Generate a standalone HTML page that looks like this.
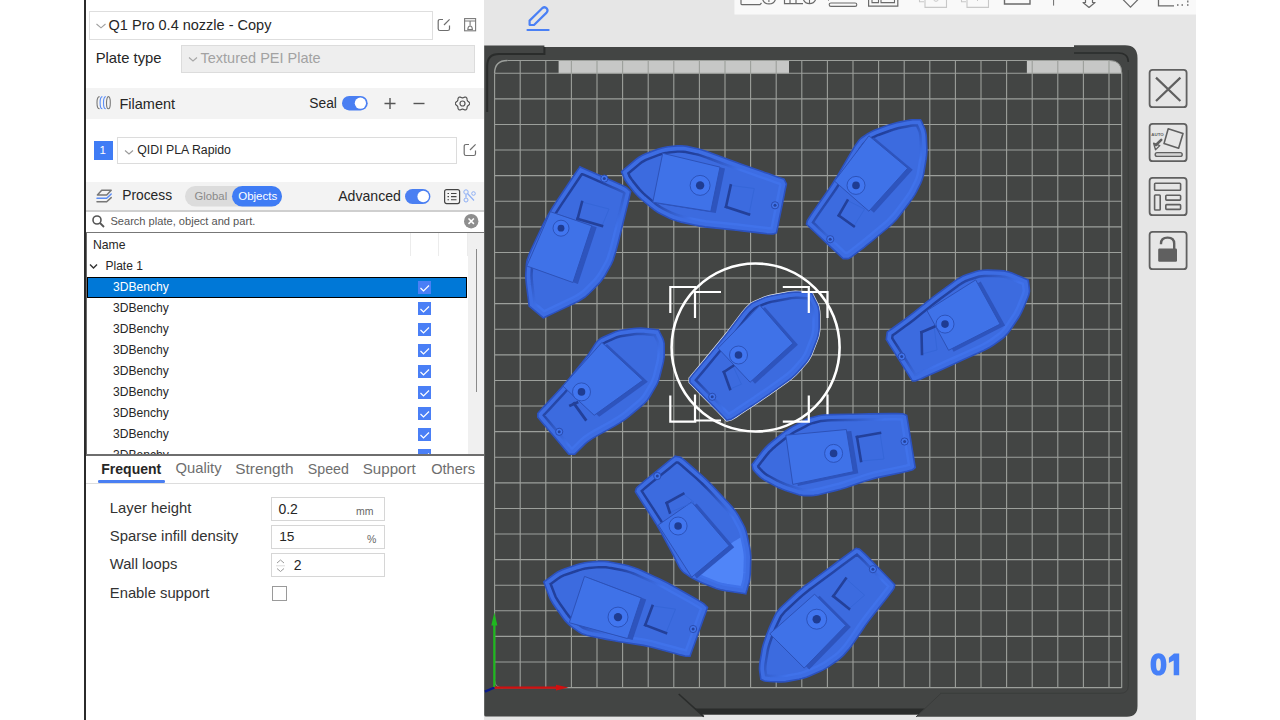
<!DOCTYPE html>
<html><head><meta charset="utf-8">
<style>
*{margin:0;padding:0;box-sizing:border-box;}
html,body{width:1280px;height:720px;overflow:hidden;background:#fff;}
body{position:relative;font-family:"Liberation Sans",sans-serif;color:#262626;}
.a{position:absolute;}
.t{position:absolute;white-space:nowrap;line-height:1;}
</style></head><body>
<!-- left dark border -->
<div class="a" style="left:84px;top:0;width:2px;height:720px;background:#2b2b2b"></div>
<!-- LEFT PANEL -->
<div id="lp" class="a" style="left:86px;top:0;width:398px;height:720px;background:#fff"></div>
<div class="a" style="left:89.2px;top:11.2px;width:343.6px;height:28.6px;background:#fff;border:1px solid #dedede;"></div>
<svg class="a" style="left:95.5px;top:22.5px" width="11" height="7" viewBox="0 0 11 7"><path d="M0.5 1 L5 4.8 L9.5 1" fill="none" stroke="#a0a0a0" stroke-width="1.1"/></svg>
<div class="t" style="left:108.6px;top:18.4px;font-size:14.5px;color:#262626;">Q1 Pro 0.4 nozzle - Copy</div>
<svg class="a" style="left:437px;top:18px" width="14" height="14" viewBox="0 0 14 14"><path d="M6 1.5 H3 Q1.2 1.5 1.2 3.3 V10.7 Q1.2 12.5 3 12.5 H10.7 Q12.5 12.5 12.5 10.7 V7.5" fill="none" stroke="#6e6e6e" stroke-width="1.2"/><path d="M7 7 L12.6 1.4" stroke="#6e6e6e" stroke-width="1.2"/></svg>
<svg class="a" style="left:463.5px;top:18px" width="13" height="14" viewBox="0 0 13 14"><rect x="0.6" y="0.6" width="11" height="12.2" fill="none" stroke="#7a7a7a" stroke-width="1.1"/><path d="M0.6 3 H11.6 M6.1 3 V7.5" stroke="#7a7a7a" stroke-width="1.1"/><path d="M3.8 11.5 Q4 8 6.1 8 Q8.2 8 8.4 11.5 Z" fill="none" stroke="#7a7a7a" stroke-width="1.1"/></svg>
<div class="t" style="left:95.7px;top:50.7px;font-size:14.8px;color:#262626;">Plate type</div>
<div class="a" style="left:181.0px;top:45.0px;width:293.8px;height:27.7px;background:#eeeeee;border:1px solid #dcdcdc;"></div>
<svg class="a" style="left:187.5px;top:56px" width="11" height="7" viewBox="0 0 11 7"><path d="M1 1.5 L5 5 L9 1.5" fill="none" stroke="#a8a8a8" stroke-width="1.2"/></svg>
<div class="t" style="left:200.5px;top:50.9px;font-size:14.5px;color:#a2a2a2;">Textured PEI Plate</div>
<div class="a" style="left:86.0px;top:87.8px;width:398.0px;height:31.2px;background:#f3f3f3;"></div>
<svg class="a" style="left:96px;top:96px" width="15" height="14" viewBox="0 0 15 14"><path d="M3.6 0.6 Q1 0.6 1 6.7 Q1 12.8 3.6 12.8" fill="none" stroke="#777" stroke-width="1.1"/><path d="M6.4 0.6 Q4.1 0.6 4.1 6.7 Q4.1 12.8 6.4 12.8" fill="none" stroke="#5a8cf5" stroke-width="1.1"/><path d="M9.8 0.6 Q7.5 0.6 7.5 6.7 Q7.5 12.8 9.8 12.8" fill="none" stroke="#5a8cf5" stroke-width="1.1"/><ellipse cx="12.4" cy="6.7" rx="1.9" ry="6.1" fill="none" stroke="#777" stroke-width="1.1"/></svg>
<div class="t" style="left:119.5px;top:97.1px;font-size:14.5px;color:#262626;">Filament</div>
<div class="t" style="left:309.3px;top:97.1px;font-size:13.8px;color:#262626;">Seal</div>
<svg class="a" style="left:342px;top:96.2px" width="26" height="15" viewBox="0 0 26 15"><rect x="0" y="0" width="25.7" height="14.4" rx="7.2" fill="#4a7ff2"/><circle cx="18.4" cy="7.2" r="5.6" fill="#fff"/></svg>
<svg class="a" style="left:384px;top:97.5px" width="12" height="12" viewBox="0 0 12 12"><path d="M6 0 V11 M0.5 5.5 H11.5" stroke="#555" stroke-width="1.4"/></svg>
<svg class="a" style="left:413px;top:97.5px" width="12" height="12" viewBox="0 0 12 12"><path d="M0.5 5.5 H11.5" stroke="#555" stroke-width="1.4"/></svg>
<svg class="a" style="left:455px;top:95.8px" width="15" height="15" viewBox="0 0 15 15"><path d="M14.65 7.50 L14.58 7.96 L14.37 8.40 L14.06 8.80 L13.68 9.16 L13.29 9.46 L12.92 9.75 L12.62 10.02 L12.39 10.32 L12.25 10.67 L12.16 11.07 L12.10 11.53 L12.03 12.03 L11.91 12.53 L11.72 13.00 L11.44 13.40 L11.08 13.69 L10.64 13.86 L10.15 13.90 L9.65 13.83 L9.16 13.68 L8.69 13.50 L8.27 13.32 L7.87 13.19 L7.50 13.15 L7.13 13.19 L6.73 13.32 L6.31 13.50 L5.84 13.68 L5.35 13.83 L4.85 13.90 L4.36 13.86 L3.93 13.69 L3.56 13.40 L3.28 13.00 L3.09 12.53 L2.97 12.03 L2.90 11.53 L2.84 11.07 L2.75 10.67 L2.61 10.32 L2.38 10.02 L2.08 9.75 L1.71 9.46 L1.32 9.16 L0.94 8.80 L0.63 8.40 L0.42 7.96 L0.35 7.50 L0.42 7.04 L0.63 6.60 L0.94 6.20 L1.32 5.84 L1.71 5.54 L2.08 5.25 L2.38 4.98 L2.61 4.68 L2.75 4.33 L2.84 3.93 L2.90 3.47 L2.97 2.97 L3.09 2.47 L3.28 2.00 L3.56 1.60 L3.92 1.31 L4.36 1.14 L4.85 1.10 L5.35 1.17 L5.84 1.32 L6.31 1.50 L6.73 1.68 L7.13 1.81 L7.50 1.85 L7.87 1.81 L8.27 1.68 L8.69 1.50 L9.16 1.32 L9.65 1.17 L10.15 1.10 L10.64 1.14 L11.08 1.31 L11.44 1.60 L11.72 2.00 L11.91 2.47 L12.03 2.97 L12.10 3.47 L12.16 3.93 L12.25 4.33 L12.39 4.67 L12.62 4.98 L12.92 5.25 L13.29 5.54 L13.68 5.84 L14.06 6.20 L14.37 6.60 L14.58 7.04Z" fill="none" stroke="#555" stroke-width="1.2" stroke-linejoin="round"/><circle cx="7.5" cy="7.5" r="2.5" fill="none" stroke="#555" stroke-width="1.2"/></svg>
<div class="a" style="left:93.7px;top:141.4px;width:18.9px;height:18.6px;background:#3f7cf5;"></div>
<div class="t" style="left:99.6px;top:145.3px;font-size:11.5px;color:#fff;">1</div>
<div class="a" style="left:117.3px;top:137.2px;width:339.5px;height:27.3px;background:#fff;border:1px solid #dcdcdc;"></div>
<svg class="a" style="left:124px;top:149px" width="11" height="7" viewBox="0 0 11 7"><path d="M1 1.5 L5 5 L9 1.5" fill="none" stroke="#9a9a9a" stroke-width="1.1"/></svg>
<div class="t" style="left:137.3px;top:144.3px;font-size:12.3px;color:#262626;">QIDI PLA Rapido</div>
<svg class="a" style="left:463px;top:143px" width="14" height="14" viewBox="0 0 14 14"><path d="M6 1.5 H3 Q1.2 1.5 1.2 3.3 V10.7 Q1.2 12.5 3 12.5 H10.7 Q12.5 12.5 12.5 10.7 V7.5" fill="none" stroke="#6e6e6e" stroke-width="1.2"/><path d="M7 7 L12.6 1.4" stroke="#6e6e6e" stroke-width="1.2"/></svg>
<div class="a" style="left:86.0px;top:182.2px;width:398.0px;height:28.2px;background:#f3f3f3;"></div>
<svg class="a" style="left:96px;top:189px" width="17" height="15" viewBox="0 0 17 15"><path d="M5.7 1.2 H15.2 L10.7 6 H1.4 Z" fill="none" stroke="#777" stroke-width="1.5" stroke-linejoin="round"/><path d="M1 9.3 H10.7 L15.2 5" fill="none" stroke="#5a8cf5" stroke-width="1.5" stroke-linecap="round" stroke-linejoin="round"/><path d="M1 12.8 H10.7 L15.2 8.6" fill="none" stroke="#777" stroke-width="1.5" stroke-linecap="round" stroke-linejoin="round"/></svg>
<div class="t" style="left:122.2px;top:188.5px;font-size:13.8px;color:#262626;">Process</div>
<svg class="a" style="left:185.4px;top:186.2px" width="97" height="21" viewBox="0 0 97 21"><rect x="0" y="0" width="97" height="20.6" rx="10.3" fill="#dcdcdc"/><rect x="47" y="0" width="50" height="20.6" rx="10.3" fill="#3f7cf5"/></svg>
<div class="t" style="left:194.5px;top:190.6px;font-size:11.3px;color:#8a8a8a;">Global</div>
<div class="t" style="left:238.2px;top:190.5px;font-size:11.5px;color:#fff;">Objects</div>
<div class="t" style="left:338.2px;top:189.1px;font-size:14.1px;color:#262626;">Advanced</div>
<svg class="a" style="left:405px;top:188.8px" width="26" height="15" viewBox="0 0 26 15"><rect x="0" y="0" width="25.4" height="15" rx="7.5" fill="#4a7ff2"/><circle cx="18.2" cy="7.5" r="5.8" fill="#fff"/></svg>
<svg class="a" style="left:444px;top:189px" width="17" height="16" viewBox="0 0 17 16"><rect x="0.6" y="0.6" width="15" height="14" rx="2" fill="none" stroke="#444" stroke-width="1.2"/><path d="M3.5 4.5 H5 M7 4.5 H12.5 M3.5 7.6 H5 M7 7.6 H12.5 M3.5 10.7 H5 M7 10.7 H12.5" stroke="#444" stroke-width="1.1"/></svg>
<svg class="a" style="left:463px;top:189px" width="14" height="15" viewBox="0 0 14 15"><circle cx="3" cy="3" r="2.2" fill="none" stroke="#8fb0f5" stroke-width="1"/><circle cx="10.5" cy="4.5" r="1.8" fill="none" stroke="#8fb0f5" stroke-width="1"/><circle cx="3" cy="11" r="2" fill="none" stroke="#8fb0f5" stroke-width="1"/><path d="M4.5 4.5 L11 11.5 M3 5.5 L3 8.5" stroke="#8fb0f5" stroke-width="1.2"/></svg>
<div class="a" style="left:86.0px;top:210.4px;width:398.0px;height:1.8px;background:#cfcfcf;"></div>
<div class="a" style="left:86.0px;top:212.2px;width:398.0px;height:19.6px;background:#fff;"></div>
<svg class="a" style="left:91.7px;top:215px" width="13" height="13" viewBox="0 0 13 13"><circle cx="5" cy="5" r="4" fill="none" stroke="#555" stroke-width="1.6"/><path d="M8 8 L12 12" stroke="#555" stroke-width="1.8"/></svg>
<div class="t" style="left:110.4px;top:215.5px;font-size:11.1px;color:#555;">Search plate, object and part.</div>
<svg class="a" style="left:463.8px;top:214.4px" width="15" height="15" viewBox="0 0 15 15"><circle cx="7.2" cy="7.2" r="7.2" fill="#8e8e8e"/><path d="M4.5 4.5 L9.9 9.9 M9.9 4.5 L4.5 9.9" stroke="#fff" stroke-width="1.5"/></svg>
<div class="a" style="left:86.0px;top:231.8px;width:398.0px;height:1.6px;background:#777777;"></div>
<div class="a" style="left:86.0px;top:233.4px;width:398.0px;height:221.6px;background:#fff;"></div>
<div class="a" style="left:468.0px;top:233.4px;width:16.0px;height:221.6px;background:#f0f0f0;"></div>
<div class="a" style="left:86.0px;top:233.4px;width:1.2px;height:221.6px;background:#6a6a6a;"></div>
<div class="a" style="left:475.6px;top:249.4px;width:1.6px;height:142.6px;background:#8a8a8a;"></div>
<div class="a" style="left:410.0px;top:233.4px;width:1.0px;height:22.6px;background:#ececec;"></div>
<div class="a" style="left:438.4px;top:233.4px;width:1.0px;height:22.6px;background:#ececec;"></div>
<div class="a" style="left:466.5px;top:233.4px;width:1.0px;height:22.6px;background:#ececec;"></div>
<div class="t" style="left:93.0px;top:238.5px;font-size:12.2px;color:#262626;">Name</div>
<svg class="a" style="left:89.2px;top:263.2px" width="9" height="7" viewBox="0 0 9 7"><path d="M1 1.5 L4.5 5 L8 1.5" fill="none" stroke="#333" stroke-width="1.4"/></svg>
<div class="t" style="left:105.5px;top:260.1px;font-size:12px;color:#262626;">Plate 1</div>
<div class="a" style="left:87.1px;top:277.3px;width:380.3px;height:20.3px;background:#0078d7;border:1px solid #000;"></div>
<div class="t" style="left:113.0px;top:281.2px;font-size:12.1px;color:#fff;">3DBenchy</div>
<div class="a" style="left:418.0px;top:280.8px;width:13.3px;height:13.2px;background:#4a7ff6;"></div>
<svg class="a" style="left:419px;top:283.9px" width="11" height="8" viewBox="0 0 11 8"><path d="M1.5 4 L4.5 7 L10 1.5" fill="none" stroke="#fff" stroke-width="1.2"/></svg>
<div class="t" style="left:113.0px;top:302.2px;font-size:12.1px;color:#262626;">3DBenchy</div>
<div class="a" style="left:418.0px;top:301.8px;width:13.3px;height:13.2px;background:#4a7ff6;"></div>
<svg class="a" style="left:419px;top:304.9px" width="11" height="8" viewBox="0 0 11 8"><path d="M1.5 4 L4.5 7 L10 1.5" fill="none" stroke="#fff" stroke-width="1.2"/></svg>
<div class="t" style="left:113.0px;top:323.2px;font-size:12.1px;color:#262626;">3DBenchy</div>
<div class="a" style="left:418.0px;top:322.8px;width:13.3px;height:13.2px;background:#4a7ff6;"></div>
<svg class="a" style="left:419px;top:325.9px" width="11" height="8" viewBox="0 0 11 8"><path d="M1.5 4 L4.5 7 L10 1.5" fill="none" stroke="#fff" stroke-width="1.2"/></svg>
<div class="t" style="left:113.0px;top:344.2px;font-size:12.1px;color:#262626;">3DBenchy</div>
<div class="a" style="left:418.0px;top:343.8px;width:13.3px;height:13.2px;background:#4a7ff6;"></div>
<svg class="a" style="left:419px;top:346.9px" width="11" height="8" viewBox="0 0 11 8"><path d="M1.5 4 L4.5 7 L10 1.5" fill="none" stroke="#fff" stroke-width="1.2"/></svg>
<div class="t" style="left:113.0px;top:365.2px;font-size:12.1px;color:#262626;">3DBenchy</div>
<div class="a" style="left:418.0px;top:364.8px;width:13.3px;height:13.2px;background:#4a7ff6;"></div>
<svg class="a" style="left:419px;top:367.9px" width="11" height="8" viewBox="0 0 11 8"><path d="M1.5 4 L4.5 7 L10 1.5" fill="none" stroke="#fff" stroke-width="1.2"/></svg>
<div class="t" style="left:113.0px;top:386.2px;font-size:12.1px;color:#262626;">3DBenchy</div>
<div class="a" style="left:418.0px;top:385.8px;width:13.3px;height:13.2px;background:#4a7ff6;"></div>
<svg class="a" style="left:419px;top:388.9px" width="11" height="8" viewBox="0 0 11 8"><path d="M1.5 4 L4.5 7 L10 1.5" fill="none" stroke="#fff" stroke-width="1.2"/></svg>
<div class="t" style="left:113.0px;top:407.2px;font-size:12.1px;color:#262626;">3DBenchy</div>
<div class="a" style="left:418.0px;top:406.8px;width:13.3px;height:13.2px;background:#4a7ff6;"></div>
<svg class="a" style="left:419px;top:409.9px" width="11" height="8" viewBox="0 0 11 8"><path d="M1.5 4 L4.5 7 L10 1.5" fill="none" stroke="#fff" stroke-width="1.2"/></svg>
<div class="t" style="left:113.0px;top:428.2px;font-size:12.1px;color:#262626;">3DBenchy</div>
<div class="a" style="left:418.0px;top:427.8px;width:13.3px;height:13.2px;background:#4a7ff6;"></div>
<svg class="a" style="left:419px;top:430.9px" width="11" height="8" viewBox="0 0 11 8"><path d="M1.5 4 L4.5 7 L10 1.5" fill="none" stroke="#fff" stroke-width="1.2"/></svg>
<div class="t" style="left:113.0px;top:449.2px;font-size:12.1px;color:#262626;">3DBenchy</div>
<div class="a" style="left:418.0px;top:448.8px;width:13.3px;height:13.2px;background:#4a7ff6;"></div>
<svg class="a" style="left:419px;top:451.9px" width="11" height="8" viewBox="0 0 11 8"><path d="M1.5 4 L4.5 7 L10 1.5" fill="none" stroke="#fff" stroke-width="1.2"/></svg>
<div class="a" style="left:86.0px;top:454.2px;width:398.0px;height:1.4px;background:#6e6e6e;"></div>
<div class="a" style="left:86.0px;top:455.6px;width:398.0px;height:264.4px;background:#fff;"></div>
<div class="t" style="left:101.3px;top:462.0px;font-size:14px;color:#262626;font-weight:bold;">Frequent</div>
<div class="t" style="left:175.5px;top:461.4px;font-size:14.8px;color:#6e6e6e;">Quality</div>
<div class="t" style="left:235.3px;top:460.9px;font-size:15.4px;color:#6e6e6e;">Strength</div>
<div class="t" style="left:307.8px;top:461.9px;font-size:14.2px;color:#6e6e6e;">Speed</div>
<div class="t" style="left:362.8px;top:461.1px;font-size:15.1px;color:#6e6e6e;">Support</div>
<div class="t" style="left:431.2px;top:461.5px;font-size:14.6px;color:#6e6e6e;">Others</div>
<div class="a" style="left:98.0px;top:480.2px;width:66.7px;height:2.4px;background:#4a7ff2;border-radius:1.2px;"></div>
<div class="a" style="left:86.0px;top:482.8px;width:398.0px;height:1.2px;background:#dddddd;"></div>
<div class="t" style="left:109.8px;top:500.9px;font-size:14.8px;color:#333;">Layer height</div>
<div class="t" style="left:109.8px;top:529.2px;font-size:14.9px;color:#333;">Sparse infill density</div>
<div class="t" style="left:109.8px;top:557.4px;font-size:14.75px;color:#333;">Wall loops</div>
<div class="t" style="left:109.8px;top:585.8px;font-size:14.8px;color:#333;">Enable support</div>
<div class="a" style="left:271.0px;top:496.6px;width:113.7px;height:24.0px;background:#fff;border:1px solid #d6d6d6;"></div>
<div class="a" style="left:271.0px;top:525.2px;width:113.7px;height:23.6px;background:#fff;border:1px solid #d6d6d6;"></div>
<div class="a" style="left:271.0px;top:553.3px;width:113.7px;height:24.2px;background:#fff;border:1px solid #d6d6d6;"></div>
<div class="t" style="left:278.4px;top:501.5px;font-size:14px;color:#262626;">0.2</div>
<div class="t" style="left:356.0px;top:505.6px;font-size:10.5px;color:#666;">mm</div>
<div class="t" style="left:279.2px;top:530.2px;font-size:13.7px;color:#262626;">15</div>
<div class="t" style="left:367.0px;top:533.9px;font-size:10.5px;color:#666;">%</div>
<svg class="a" style="left:275.5px;top:558.5px" width="10" height="14" viewBox="0 0 10 14"><path d="M1 4 L4.5 1 L8 4 M1 9.5 L4.5 12.5 L8 9.5" fill="none" stroke="#9a9a9a" stroke-width="1"/><path d="M0 6.8 H9" stroke="#dcdcdc" stroke-width="1"/></svg>
<div class="t" style="left:293.8px;top:558.1px;font-size:14px;color:#262626;">2</div>
<div class="a" style="left:272.0px;top:586.0px;width:14.8px;height:15.3px;background:#fff;border:1px solid #9a9a9a;"></div>
<!-- VIEWPORT -->
<div class="a" style="left:484px;top:0;width:712px;height:720px;background:#e6e6e6"></div>
<svg class="a" style="left:484px;top:0" width="712" height="720" viewBox="484 0 712 720">
<path d="M484.2 45.6 L544.4 45.6 L544.4 47 L1074 47 L1074 45.3 L1125 45.3 Q1137.5 45.3 1137.5 58 L1137.5 706 Q1137.5 716.7 1127 716.7 L486 716.6 Q484.2 716.6 484.2 715 Z" fill="#434544"/>
<path d="M694.9 708.4 L924.9 708.4 L918.1 714.8 L702.1 714.8 Z" fill="#2a2c2b"/>
<path d="M702.1 714.8 L918.1 714.8 L915.6 717.2 L915.6 720 L703.8 720 L703.8 716.6 Z" fill="#e6e6e6"/>
<path d="M678.7 694 L703.8 716.6" stroke="#2a2c2b" stroke-width="1.6"/>
<path d="M940.9 693.4 L916 716.9" stroke="#3a3c3b" stroke-width="1"/>
<path d="M487.2 112 L487.2 66 Q487.2 54 499 54 L544.4 54 L544.4 47" fill="none" stroke="#2a2c2b" stroke-width="2"/>
<path d="M1074 53 L1118 53 Q1128.3 53 1128.3 62" fill="none" stroke="#2a2c2b" stroke-width="1.6"/>
<rect x="558.6" y="60.5" width="230.4" height="13" fill="#c6c7c6"/>
<path d="M1026.9 60.5 L1109 60.5 Q1121.7 60.5 1121.7 73 L1121.7 73.5 L1026.9 73.5 Z" fill="#c6c7c6"/>
<path d="M494.60 73.30V679.80 M520.20 60.50V687.80 M545.80 60.50V687.80 M571.40 60.50V687.80 M597.00 60.50V687.80 M622.60 60.50V687.80 M648.20 60.50V687.80 M673.80 60.50V687.80 M699.40 60.50V687.80 M725.00 60.50V687.80 M750.60 60.50V687.80 M776.20 60.50V687.80 M801.80 60.50V687.80 M827.40 60.50V687.80 M853.00 60.50V687.80 M878.60 60.50V687.80 M904.20 60.50V687.80 M929.80 60.50V687.80 M955.40 60.50V687.80 M981.00 60.50V687.80 M1006.60 60.50V687.80 M1032.20 60.50V687.80 M1057.80 60.50V687.80 M1083.40 60.50V687.80 M1109.00 60.50V687.80 M1121.70 72.50V687.80 M494.60 73.28H1121.70 M494.60 98.88H1121.70 M494.60 124.47H1121.70 M494.60 150.07H1121.70 M494.60 175.67H1121.70 M494.60 201.27H1121.70 M494.60 226.86H1121.70 M494.60 252.46H1121.70 M494.60 278.06H1121.70 M494.60 303.65H1121.70 M494.60 329.25H1121.70 M494.60 354.85H1121.70 M494.60 380.44H1121.70 M494.60 406.04H1121.70 M494.60 431.64H1121.70 M494.60 457.24H1121.70 M494.60 482.83H1121.70 M494.60 508.43H1121.70 M494.60 534.03H1121.70 M494.60 559.62H1121.70 M494.60 585.22H1121.70 M494.60 610.82H1121.70 M494.60 636.41H1121.70 M494.60 662.01H1121.70 M494.60 687.61H1121.70 M507.40 60.50H1109.70" stroke="#9c9f9b" stroke-width="1.1" fill="none"/>
<path d="M494.6 73.3 Q494.6 60.5 507.40000000000003 60.5" stroke="#9c9f9b" stroke-width="1.4" fill="none"/>
<path d="M1109.7 60.5 Q1121.7 60.5 1121.7 72.5" stroke="#8a8c89" stroke-width="1" fill="none"/>
<path d="M494.6 679.8 Q494.6 687.8 502.6 687.8" stroke="#8a8c89" stroke-width="1" fill="none"/>
<path d="M1128.3 70 L1128.3 686 Q1128.3 693.3 1120 693.3 L940 693.3" stroke="#3a3c3b" stroke-width="1" fill="none"/>
<path d="M494.6 687.5 L484.9 691.7" stroke="#0a1a8a" stroke-width="2.4"/>
<path d="M494.3 687 V622" stroke="#1fb81f" stroke-width="2.2"/>
<path d="M491.3 625.5 L494.3 612.5 L497.4 625.5 Z" fill="#1fb81f"/>
<path d="M494.6 687.6 H558" stroke="#d01010" stroke-width="2.2"/>
<path d="M556 684.8 L568.4 687.6 L556 690.4 Z" fill="#d01010"/>
<defs><clipPath id="bc0"><path d="M579.9 166.8 L580.9 167.3 L585.8 169.4 L591.7 171.9 L614.2 181.8 L620.2 184.4 L625.6 187.0 L627.2 188.1 L629.5 190.4 L630.1 191.0 L630.6 191.5 L630.7 191.6 L630.3 193.1 L628.6 200.2 L626.5 208.8 L618.4 241.7 L616.0 250.8 L613.1 260.1 L611.2 264.3 L605.4 274.7 L603.5 277.8 L600.3 282.0 L597.6 284.9 L588.3 294.2 L585.0 297.0 L578.8 301.0 L573.2 303.8 L553.6 313.1 L548.4 315.5 L544.2 317.5 L543.3 317.9 L543.0 317.6 L541.5 316.4 L539.7 314.9 L532.8 309.1 L531.0 307.6 L529.5 306.4 L529.2 306.1 L529.1 305.5 L528.7 302.5 L528.3 298.9 L526.5 285.0 L526.1 281.0 L525.8 276.0 L525.9 273.0 L526.5 263.7 L527.1 260.3 L529.5 253.6 L532.2 247.5 L542.7 225.4 L546.1 218.7 L551.7 209.0 L556.2 202.0 L571.8 178.8 L575.8 172.8 L579.2 167.9Z"/></clipPath><linearGradient id="gl0" gradientUnits="userSpaceOnUse" x1="551.6" y1="228.7" x2="583.6" y2="260.7"><stop offset="0" stop-color="#fff"/><stop offset="1" stop-color="#000"/></linearGradient><mask id="mk0" maskUnits="userSpaceOnUse" x="0" y="0" width="1280" height="720"><rect x="0" y="0" width="1280" height="720" fill="url(#gl0)"/></mask><clipPath id="bc1"><path d="M621.5 171.7 L621.9 171.3 L623.9 169.6 L626.3 167.6 L635.7 159.7 L638.6 157.5 L643.0 154.9 L646.4 153.5 L657.6 149.3 L661.0 148.2 L665.3 147.2 L668.2 146.7 L677.1 145.9 L679.9 145.7 L683.9 146.0 L686.8 146.4 L696.6 148.5 L699.8 149.2 L705.1 150.9 L709.4 152.4 L724.4 158.1 L729.0 159.8 L735.4 162.1 L740.0 163.7 L754.9 169.0 L759.3 170.5 L764.7 172.4 L768.2 173.6 L778.6 177.4 L781.4 178.3 L783.6 179.1 L784.1 179.3 L784.2 179.4 L784.4 179.9 L784.7 180.5 L785.8 182.7 L786.1 183.3 L786.3 183.8 L786.4 183.9 L786.2 185.0 L785.1 190.1 L783.9 196.4 L779.0 220.3 L777.8 226.6 L776.7 231.7 L776.5 232.8 L776.4 232.8 L775.9 233.0 L775.3 233.2 L773.1 233.9 L771.6 234.0 L766.9 233.7 L761.8 233.1 L742.3 230.9 L736.6 230.2 L729.2 229.4 L724.4 228.9 L709.4 227.4 L704.9 226.9 L698.8 225.9 L694.6 225.0 L681.2 222.1 L677.3 221.1 L672.5 219.5 L669.5 218.2 L660.5 213.7 L657.7 212.2 L653.9 209.7 L651.1 207.5 L642.2 200.0 L639.6 197.7 L636.4 194.5 L634.4 192.2 L628.4 184.7 L626.8 182.5 L625.1 180.0 L624.3 178.5 L622.5 174.0 L622.0 172.9 L621.6 171.9Z"/></clipPath><linearGradient id="gl1" gradientUnits="userSpaceOnUse" x1="680.9" y1="166.1" x2="712.9" y2="198.1"><stop offset="0" stop-color="#fff"/><stop offset="1" stop-color="#000"/></linearGradient><mask id="mk1" maskUnits="userSpaceOnUse" x="0" y="0" width="1280" height="720"><rect x="0" y="0" width="1280" height="720" fill="url(#gl1)"/></mask><clipPath id="bc2"><path d="M920.6 119.7 L920.7 120.0 L921.3 121.2 L922.0 122.7 L924.6 128.5 L925.3 130.5 L926.0 134.0 L926.3 137.0 L926.8 147.6 L926.9 150.9 L926.5 155.9 L926.0 159.7 L923.9 172.3 L923.2 176.0 L921.8 180.5 L920.6 183.3 L916.4 191.8 L914.9 194.6 L911.9 199.1 L909.3 202.8 L899.7 215.4 L896.7 219.2 L891.9 224.2 L888.2 227.5 L875.5 238.0 L871.8 241.1 L867.0 244.9 L864.0 247.4 L854.4 254.7 L851.8 256.7 L849.1 258.3 L847.9 258.6 L844.7 258.6 L843.9 258.6 L843.2 258.6 L843.1 258.6 L842.3 257.8 L838.4 254.2 L833.8 249.8 L815.8 233.0 L811.2 228.6 L807.3 225.0 L806.5 224.2 L806.5 224.1 L806.6 223.6 L806.8 223.1 L807.2 220.9 L808.0 219.5 L810.9 215.0 L814.4 209.9 L827.6 191.0 L831.6 185.1 L836.9 176.8 L840.5 170.7 L852.2 150.6 L855.5 145.2 L859.3 140.0 L861.5 138.0 L867.8 133.7 L870.0 132.4 L873.8 130.6 L877.1 129.3 L888.8 125.1 L892.2 123.9 L896.5 122.7 L899.2 122.1 L907.6 120.5 L910.0 120.1 L912.7 119.8 L914.2 119.7 L918.4 119.7 L919.5 119.7 L920.4 119.7Z"/></clipPath><linearGradient id="gl2" gradientUnits="userSpaceOnUse" x1="856.2" y1="159.3" x2="888.2" y2="191.3"><stop offset="0" stop-color="#fff"/><stop offset="1" stop-color="#000"/></linearGradient><mask id="mk2" maskUnits="userSpaceOnUse" x="0" y="0" width="1280" height="720"><rect x="0" y="0" width="1280" height="720" fill="url(#gl2)"/></mask><clipPath id="bc3"><path d="M1028.1 279.9 L1027.6 279.7 L1025.3 278.7 L1022.6 277.6 L1011.9 273.1 L1008.6 271.9 L1003.7 270.9 L999.9 270.6 L987.6 270.1 L983.9 270.2 L979.1 270.7 L976.1 271.5 L966.3 274.7 L963.2 275.9 L958.3 278.7 L954.4 281.3 L941.1 291.1 L937.0 294.1 L931.4 298.4 L927.3 301.6 L914.0 312.3 L910.1 315.4 L905.2 319.1 L902.0 321.5 L892.3 328.5 L889.7 330.4 L887.6 331.9 L887.2 332.2 L887.2 332.4 L887.1 333.1 L887.0 334.1 L886.5 337.6 L886.4 338.6 L886.3 339.3 L886.3 339.5 L886.9 340.4 L889.6 344.8 L893.0 350.1 L905.8 370.4 L909.2 375.7 L911.9 380.1 L912.5 381.0 L912.6 381.0 L913.0 381.0 L913.4 381.0 L915.2 381.0 L916.5 380.6 L920.6 378.9 L925.3 376.8 L943.0 368.9 L948.4 366.4 L956.0 363.0 L961.4 360.6 L979.2 352.6 L984.2 350.3 L989.9 347.2 L993.0 345.3 L1001.8 339.0 L1004.4 336.9 L1007.8 333.3 L1010.1 330.3 L1017.2 319.7 L1019.3 316.5 L1021.7 311.9 L1023.2 308.7 L1027.6 298.0 L1028.7 295.0 L1029.5 291.4 L1029.4 289.3 L1028.6 283.1 L1028.3 281.5 L1028.1 280.2Z"/></clipPath><linearGradient id="gl3" gradientUnits="userSpaceOnUse" x1="939.2" y1="298.0" x2="971.2" y2="330.0"><stop offset="0" stop-color="#fff"/><stop offset="1" stop-color="#000"/></linearGradient><mask id="mk3" maskUnits="userSpaceOnUse" x="0" y="0" width="1280" height="720"><rect x="0" y="0" width="1280" height="720" fill="url(#gl3)"/></mask><clipPath id="bc4"><path d="M811.4 292.8 L811.6 293.1 L812.4 294.8 L813.4 296.8 L817.2 304.3 L818.2 306.9 L819.0 311.2 L819.2 314.8 L819.2 327.1 L819.0 330.9 L818.0 336.3 L816.7 340.1 L811.9 352.4 L810.3 356.1 L807.6 360.6 L805.4 363.4 L797.9 371.9 L795.3 374.6 L790.8 378.5 L787.0 381.3 L773.6 390.9 L769.4 393.9 L762.8 398.3 L757.8 401.8 L740.6 413.2 L736.1 416.2 L731.9 418.8 L730.5 419.4 L728.0 419.9 L727.4 420.0 L726.9 420.1 L726.8 420.1 L726.0 419.2 L722.1 415.3 L717.4 410.4 L699.3 391.9 L694.6 387.0 L690.7 383.1 L689.9 382.2 L689.9 382.1 L689.9 381.7 L689.9 381.2 L689.9 379.3 L689.9 378.8 L689.9 378.4 L689.9 378.3 L690.7 377.4 L694.2 373.1 L698.6 367.9 L715.2 347.9 L720.1 342.0 L726.4 334.2 L730.4 329.1 L742.7 312.8 L746.4 308.4 L750.9 304.2 L753.7 302.4 L762.2 298.7 L765.1 297.6 L769.8 296.2 L773.6 295.5 L787.0 293.0 L790.8 292.4 L795.5 292.0 L798.4 292.1 L806.9 292.5 L809.2 292.7 L811.0 292.8Z"/></clipPath><linearGradient id="gl4" gradientUnits="userSpaceOnUse" x1="741.7" y1="327.7" x2="773.7" y2="359.7"><stop offset="0" stop-color="#fff"/><stop offset="1" stop-color="#000"/></linearGradient><mask id="mk4" maskUnits="userSpaceOnUse" x="0" y="0" width="1280" height="720"><rect x="0" y="0" width="1280" height="720" fill="url(#gl4)"/></mask><clipPath id="bc5"><path d="M658.3 329.7 L658.4 330.0 L659.1 331.2 L659.8 332.7 L662.7 338.4 L663.4 340.3 L664.1 343.4 L664.2 345.9 L664.2 354.4 L664.1 357.2 L663.4 361.5 L662.7 364.8 L659.8 376.3 L658.8 379.7 L657.0 384.2 L655.3 387.2 L649.7 396.7 L647.7 399.7 L644.0 403.7 L640.7 406.6 L629.3 416.2 L625.5 419.1 L619.4 423.1 L614.4 426.1 L597.2 435.6 L592.5 438.4 L587.4 441.9 L584.8 444.1 L578.2 450.7 L576.4 452.5 L575.0 453.9 L574.7 454.2 L574.6 454.2 L574.0 454.2 L573.2 454.2 L570.4 454.2 L569.6 454.2 L569.0 454.2 L568.9 454.2 L568.2 453.4 L564.9 449.5 L561.0 444.8 L545.7 426.6 L541.8 421.9 L538.5 418.0 L537.8 417.2 L537.8 417.1 L537.8 416.7 L537.8 416.2 L537.8 414.3 L537.8 413.8 L537.8 413.4 L537.8 413.3 L538.4 412.7 L541.0 409.8 L544.2 406.4 L556.6 393.0 L560.4 388.9 L565.7 382.7 L569.5 378.2 L581.8 362.9 L585.3 358.6 L589.0 353.7 L590.8 351.0 L595.6 343.4 L597.3 341.2 L600.4 338.6 L603.0 337.2 L612.6 332.9 L615.5 331.7 L619.8 330.5 L623.0 330.0 L633.4 328.5 L636.6 328.2 L640.9 328.1 L643.8 328.3 L653.4 329.2 L655.8 329.5 L657.9 329.7Z"/></clipPath><linearGradient id="gl5" gradientUnits="userSpaceOnUse" x1="586.0" y1="362.6" x2="618.0" y2="394.6"><stop offset="0" stop-color="#fff"/><stop offset="1" stop-color="#000"/></linearGradient><mask id="mk5" maskUnits="userSpaceOnUse" x="0" y="0" width="1280" height="720"><rect x="0" y="0" width="1280" height="720" fill="url(#gl5)"/></mask><clipPath id="bc6"><path d="M752.0 464.7 L752.3 464.3 L753.8 462.4 L755.6 460.0 L762.5 451.1 L764.8 448.4 L768.5 444.7 L771.5 442.1 L781.8 433.8 L785.0 431.4 L789.4 428.5 L792.6 426.6 L802.9 421.2 L805.9 419.6 L809.6 418.1 L811.9 417.4 L818.7 415.7 L821.3 415.2 L826.5 414.8 L831.3 414.6 L848.5 414.3 L854.0 414.2 L862.4 414.0 L869.0 413.9 L891.0 413.6 L896.9 413.5 L902.0 413.7 L903.6 413.9 L905.6 415.0 L906.2 415.2 L906.6 415.5 L906.7 415.5 L906.9 416.7 L907.8 422.1 L908.9 428.8 L913.0 454.2 L914.1 460.9 L915.0 466.3 L915.2 467.5 L915.1 467.6 L914.8 467.9 L914.5 468.2 L913.0 469.6 L911.8 470.1 L907.2 471.3 L901.9 472.5 L882.0 476.6 L876.2 477.9 L868.9 479.9 L864.4 481.3 L850.6 486.1 L846.4 487.5 L840.5 489.3 L836.2 490.4 L822.5 493.8 L818.6 494.7 L814.1 495.4 L811.7 495.6 L804.8 495.6 L802.5 495.4 L798.8 494.7 L795.8 493.8 L785.6 490.4 L782.5 489.3 L778.3 487.5 L775.5 486.1 L766.6 481.3 L764.0 479.9 L761.2 477.9 L759.7 476.6 L755.6 472.5 L754.5 471.3 L753.4 469.8 L753.0 468.9 L752.4 466.1 L752.2 465.4 L752.0 464.8Z"/></clipPath><linearGradient id="gl6" gradientUnits="userSpaceOnUse" x1="804.9" y1="433.9" x2="836.9" y2="465.9"><stop offset="0" stop-color="#fff"/><stop offset="1" stop-color="#000"/></linearGradient><mask id="mk6" maskUnits="userSpaceOnUse" x="0" y="0" width="1280" height="720"><rect x="0" y="0" width="1280" height="720" fill="url(#gl6)"/></mask><clipPath id="bc7"><path d="M675.0 456.2 L675.1 456.3 L675.8 456.4 L676.6 456.5 L679.7 457.0 L681.1 457.7 L684.6 460.3 L688.1 463.4 L701.4 475.1 L705.5 478.9 L711.1 484.4 L715.2 488.7 L728.5 503.0 L732.2 507.1 L736.1 512.1 L738.1 515.2 L743.1 524.4 L744.6 527.4 L746.2 532.0 L747.1 535.6 L749.7 547.8 L750.3 551.6 L750.8 556.8 L750.7 560.6 L750.3 572.8 L750.0 576.3 L749.5 580.5 L748.9 582.9 L746.9 590.0 L746.3 591.9 L745.9 593.4 L745.8 593.8 L745.2 593.7 L742.4 593.2 L738.9 592.7 L725.6 590.7 L721.6 589.9 L716.2 588.4 L712.4 586.9 L700.1 581.9 L696.7 580.3 L692.7 578.4 L690.6 577.1 L684.4 572.9 L682.7 571.5 L680.5 568.9 L679.1 566.6 L675.0 558.4 L673.6 555.7 L671.2 551.1 L669.2 547.3 L662.0 534.0 L659.6 529.8 L655.7 523.2 L652.5 518.1 L641.2 500.7 L638.3 496.2 L635.9 492.5 L635.4 491.7 L635.4 491.6 L635.5 491.2 L635.7 490.6 L636.2 488.6 L637.2 487.3 L641.4 483.6 L646.3 479.5 L665.2 464.2 L670.1 460.2 L674.1 457.0Z"/></clipPath><linearGradient id="gl7" gradientUnits="userSpaceOnUse" x1="677.3" y1="508.8" x2="709.3" y2="540.8"><stop offset="0" stop-color="#fff"/><stop offset="1" stop-color="#000"/></linearGradient><mask id="mk7" maskUnits="userSpaceOnUse" x="0" y="0" width="1280" height="720"><rect x="0" y="0" width="1280" height="720" fill="url(#gl7)"/></mask><clipPath id="bc8"><path d="M543.8 581.9 L544.1 581.7 L545.7 580.5 L547.7 579.1 L555.1 573.6 L557.6 572.0 L561.7 570.0 L565.1 568.8 L576.8 564.8 L580.3 563.8 L585.0 562.7 L588.2 562.3 L598.4 561.4 L601.7 561.3 L606.7 561.6 L610.6 562.2 L623.9 564.7 L628.1 565.7 L634.3 567.7 L639.0 569.6 L654.6 576.7 L659.6 579.0 L667.2 582.8 L673.0 586.0 L692.5 597.0 L697.7 600.0 L702.4 602.8 L703.9 603.9 L706.3 606.3 L706.9 606.9 L707.4 607.4 L707.5 607.5 L707.1 608.6 L705.3 613.7 L703.0 619.9 L694.5 643.8 L692.2 650.0 L690.4 655.1 L690.0 656.2 L689.9 656.2 L689.4 656.2 L688.8 656.2 L686.3 656.2 L684.9 656.0 L680.3 654.9 L675.3 653.5 L656.6 648.5 L651.0 647.0 L643.6 645.4 L638.7 644.6 L623.0 642.2 L618.2 641.5 L611.5 640.3 L606.7 639.4 L591.1 636.3 L586.6 635.3 L581.6 633.4 L578.8 631.8 L571.1 626.4 L568.7 624.4 L565.3 620.9 L562.9 617.8 L555.1 606.8 L552.9 603.5 L550.4 599.2 L549.2 596.2 L545.6 586.8 L544.7 584.3 L544.0 582.3Z"/></clipPath><linearGradient id="gl8" gradientUnits="userSpaceOnUse" x1="600.1" y1="584.1" x2="632.1" y2="616.1"><stop offset="0" stop-color="#fff"/><stop offset="1" stop-color="#000"/></linearGradient><mask id="mk8" maskUnits="userSpaceOnUse" x="0" y="0" width="1280" height="720"><rect x="0" y="0" width="1280" height="720" fill="url(#gl8)"/></mask><clipPath id="bc9"><path d="M856.2 548.3 L856.3 548.3 L856.8 548.4 L857.3 548.6 L859.3 549.1 L860.6 550.1 L864.7 553.9 L869.2 558.4 L886.0 575.8 L890.4 580.3 L894.0 584.0 L894.8 584.8 L894.8 584.9 L894.7 585.3 L894.5 585.9 L894.0 587.9 L893.3 589.2 L890.3 593.3 L886.9 597.7 L873.6 614.6 L869.8 619.4 L865.4 625.4 L863.0 629.0 L855.7 639.8 L853.6 642.9 L851.0 646.5 L849.4 648.6 L844.3 654.4 L842.6 656.2 L839.8 658.7 L837.4 660.5 L829.3 666.2 L826.7 667.9 L822.7 670.1 L819.7 671.5 L809.5 676.0 L806.4 677.2 L802.0 678.6 L798.9 679.3 L788.6 681.1 L785.6 681.6 L781.4 681.9 L778.6 681.9 L769.7 681.5 L767.2 681.3 L764.9 681.0 L763.9 680.7 L761.9 679.7 L761.3 679.5 L760.9 679.2 L760.8 679.2 L760.8 678.9 L760.6 677.7 L760.4 676.2 L759.6 670.5 L759.5 668.5 L759.7 665.1 L760.0 662.2 L761.7 652.0 L762.2 649.0 L763.2 645.0 L764.0 642.4 L766.8 634.3 L767.8 631.7 L769.3 627.9 L770.5 625.1 L774.9 615.7 L776.5 612.7 L780.1 608.3 L783.5 605.0 L795.7 593.7 L799.6 590.3 L805.5 585.5 L810.1 582.1 L825.3 570.8 L829.8 567.6 L835.3 563.5 L838.6 561.0 L848.9 553.4 L851.6 551.4 L854.0 549.6 L854.7 549.1 L855.7 548.6 L856.0 548.4 L856.2 548.3Z"/></clipPath><linearGradient id="gl9" gradientUnits="userSpaceOnUse" x1="797.0" y1="601.4" x2="829.0" y2="633.4"><stop offset="0" stop-color="#fff"/><stop offset="1" stop-color="#000"/></linearGradient><mask id="mk9" maskUnits="userSpaceOnUse" x="0" y="0" width="1280" height="720"><rect x="0" y="0" width="1280" height="720" fill="url(#gl9)"/></mask></defs><g>
<path d="M579.9 166.8 L580.9 167.3 L585.8 169.4 L591.7 171.9 L614.2 181.8 L620.2 184.4 L625.6 187.0 L627.2 188.1 L629.5 190.4 L630.1 191.0 L630.6 191.5 L630.7 191.6 L630.3 193.1 L628.6 200.2 L626.5 208.8 L618.4 241.7 L616.0 250.8 L613.1 260.1 L611.2 264.3 L605.4 274.7 L603.5 277.8 L600.3 282.0 L597.6 284.9 L588.3 294.2 L585.0 297.0 L578.8 301.0 L573.2 303.8 L553.6 313.1 L548.4 315.5 L544.2 317.5 L543.3 317.9 L543.0 317.6 L541.5 316.4 L539.7 314.9 L532.8 309.1 L531.0 307.6 L529.5 306.4 L529.2 306.1 L529.1 305.5 L528.7 302.5 L528.3 298.9 L526.5 285.0 L526.1 281.0 L525.8 276.0 L525.9 273.0 L526.5 263.7 L527.1 260.3 L529.5 253.6 L532.2 247.5 L542.7 225.4 L546.1 218.7 L551.7 209.0 L556.2 202.0 L571.8 178.8 L575.8 172.8 L579.2 167.9Z" fill="#3c6bdf"/>
<path d="M579.9 166.8 L580.9 167.3 L585.8 169.4 L591.7 171.9 L614.2 181.8 L620.2 184.4 L625.6 187.0 L627.2 188.1 L629.5 190.4 L630.1 191.0 L630.6 191.5 L630.7 191.6 L630.3 193.1 L628.6 200.2 L626.5 208.8 L618.4 241.7 L616.0 250.8 L613.1 260.1 L611.2 264.3 L605.4 274.7 L603.5 277.8 L600.3 282.0 L597.6 284.9 L588.3 294.2 L585.0 297.0 L578.8 301.0 L573.2 303.8 L553.6 313.1 L548.4 315.5 L544.2 317.5 L543.3 317.9 L543.0 317.6 L541.5 316.4 L539.7 314.9 L532.8 309.1 L531.0 307.6 L529.5 306.4 L529.2 306.1 L529.1 305.5 L528.7 302.5 L528.3 298.9 L526.5 285.0 L526.1 281.0 L525.8 276.0 L525.9 273.0 L526.5 263.7 L527.1 260.3 L529.5 253.6 L532.2 247.5 L542.7 225.4 L546.1 218.7 L551.7 209.0 L556.2 202.0 L571.8 178.8 L575.8 172.8 L579.2 167.9Z" fill="none" stroke="#4072ea" stroke-width="14" clip-path="url(#bc0)"/>
<g mask="url(#mk0)"><path d="M579.9 166.8 L580.9 167.3 L585.8 169.4 L591.7 171.9 L614.2 181.8 L620.2 184.4 L625.6 187.0 L627.2 188.1 L629.5 190.4 L630.1 191.0 L630.6 191.5 L630.7 191.6 L630.3 193.1 L628.6 200.2 L626.5 208.8 L618.4 241.7 L616.0 250.8 L613.1 260.1 L611.2 264.3 L605.4 274.7 L603.5 277.8 L600.3 282.0 L597.6 284.9 L588.3 294.2 L585.0 297.0 L578.8 301.0 L573.2 303.8 L553.6 313.1 L548.4 315.5 L544.2 317.5 L543.3 317.9 L543.0 317.6 L541.5 316.4 L539.7 314.9 L532.8 309.1 L531.0 307.6 L529.5 306.4 L529.2 306.1 L529.1 305.5 L528.7 302.5 L528.3 298.9 L526.5 285.0 L526.1 281.0 L525.8 276.0 L525.9 273.0 L526.5 263.7 L527.1 260.3 L529.5 253.6 L532.2 247.5 L542.7 225.4 L546.1 218.7 L551.7 209.0 L556.2 202.0 L571.8 178.8 L575.8 172.8 L579.2 167.9Z" fill="none" stroke="#22409c" stroke-width="14" clip-path="url(#bc0)"/></g>
<path d="M579.9 166.8 L580.9 167.3 L585.8 169.4 L591.7 171.9 L614.2 181.8 L620.2 184.4 L625.6 187.0 L627.2 188.1 L629.5 190.4 L630.1 191.0 L630.6 191.5 L630.7 191.6 L630.3 193.1 L628.6 200.2 L626.5 208.8 L618.4 241.7 L616.0 250.8 L613.1 260.1 L611.2 264.3 L605.4 274.7 L603.5 277.8 L600.3 282.0 L597.6 284.9 L588.3 294.2 L585.0 297.0 L578.8 301.0 L573.2 303.8 L553.6 313.1 L548.4 315.5 L544.2 317.5 L543.3 317.9 L543.0 317.6 L541.5 316.4 L539.7 314.9 L532.8 309.1 L531.0 307.6 L529.5 306.4 L529.2 306.1 L529.1 305.5 L528.7 302.5 L528.3 298.9 L526.5 285.0 L526.1 281.0 L525.8 276.0 L525.9 273.0 L526.5 263.7 L527.1 260.3 L529.5 253.6 L532.2 247.5 L542.7 225.4 L546.1 218.7 L551.7 209.0 L556.2 202.0 L571.8 178.8 L575.8 172.8 L579.2 167.9Z" fill="none" stroke="#3d6de3" stroke-width="9" clip-path="url(#bc0)"/>
<path d="M579.9 166.8 L580.9 167.3 L585.8 169.4 L591.7 171.9 L614.2 181.8 L620.2 184.4 L625.6 187.0 L627.2 188.1 L629.5 190.4 L630.1 191.0 L630.6 191.5 L630.7 191.6 L630.3 193.1 L628.6 200.2 L626.5 208.8 L618.4 241.7 L616.0 250.8 L613.1 260.1 L611.2 264.3 L605.4 274.7 L603.5 277.8 L600.3 282.0 L597.6 284.9 L588.3 294.2 L585.0 297.0 L578.8 301.0 L573.2 303.8 L553.6 313.1 L548.4 315.5 L544.2 317.5 L543.3 317.9 L543.0 317.6 L541.5 316.4 L539.7 314.9 L532.8 309.1 L531.0 307.6 L529.5 306.4 L529.2 306.1 L529.1 305.5 L528.7 302.5 L528.3 298.9 L526.5 285.0 L526.1 281.0 L525.8 276.0 L525.9 273.0 L526.5 263.7 L527.1 260.3 L529.5 253.6 L532.2 247.5 L542.7 225.4 L546.1 218.7 L551.7 209.0 L556.2 202.0 L571.8 178.8 L575.8 172.8 L579.2 167.9Z" fill="none" stroke="#2c52bf" stroke-width="1.6"/>
<path d="M555.4 213.2 L596.7 227.3 L577.9 284.0 L531.8 267.5Z" fill="#2e54bd" clip-path="url(#bc0)"/>
<path d="M550.4 211.7 L591.7 225.8 L572.9 282.5 L526.8 266.0Z" fill="#3f72e8" stroke="#2d52b8" stroke-width="1" stroke-linejoin="round"/>
<circle cx="561" cy="228.2" r="8" fill="#4176f0" stroke="#2a4fb4" stroke-width="0.9"/>
<circle cx="561" cy="228.2" r="3.4" fill="#1f3c92"/>
<path d="M582.0 202.0 L609.0 209.0 L602.0 226.0 L577.6 218.8Z" fill="none" stroke="#3566d8" stroke-width="1"/>
<path d="M577.6 218.8 L582.0 202.0" stroke="#23409a" stroke-width="2.6" stroke-linecap="square"/>
<path d="M602.0 226.0 L577.6 218.8" stroke="#23409a" stroke-width="2.6" stroke-linecap="square"/>
<circle cx="604.3" cy="178.6" r="3.6" fill="#4275ec" stroke="#2a4cb0" stroke-width="1"/><circle cx="604.3" cy="178.6" r="1.5" fill="#24439e"/>
</g>
<g>
<path d="M621.5 171.7 L621.9 171.3 L623.9 169.6 L626.3 167.6 L635.7 159.7 L638.6 157.5 L643.0 154.9 L646.4 153.5 L657.6 149.3 L661.0 148.2 L665.3 147.2 L668.2 146.7 L677.1 145.9 L679.9 145.7 L683.9 146.0 L686.8 146.4 L696.6 148.5 L699.8 149.2 L705.1 150.9 L709.4 152.4 L724.4 158.1 L729.0 159.8 L735.4 162.1 L740.0 163.7 L754.9 169.0 L759.3 170.5 L764.7 172.4 L768.2 173.6 L778.6 177.4 L781.4 178.3 L783.6 179.1 L784.1 179.3 L784.2 179.4 L784.4 179.9 L784.7 180.5 L785.8 182.7 L786.1 183.3 L786.3 183.8 L786.4 183.9 L786.2 185.0 L785.1 190.1 L783.9 196.4 L779.0 220.3 L777.8 226.6 L776.7 231.7 L776.5 232.8 L776.4 232.8 L775.9 233.0 L775.3 233.2 L773.1 233.9 L771.6 234.0 L766.9 233.7 L761.8 233.1 L742.3 230.9 L736.6 230.2 L729.2 229.4 L724.4 228.9 L709.4 227.4 L704.9 226.9 L698.8 225.9 L694.6 225.0 L681.2 222.1 L677.3 221.1 L672.5 219.5 L669.5 218.2 L660.5 213.7 L657.7 212.2 L653.9 209.7 L651.1 207.5 L642.2 200.0 L639.6 197.7 L636.4 194.5 L634.4 192.2 L628.4 184.7 L626.8 182.5 L625.1 180.0 L624.3 178.5 L622.5 174.0 L622.0 172.9 L621.6 171.9Z" fill="#3c6bdf"/>
<path d="M621.5 171.7 L621.9 171.3 L623.9 169.6 L626.3 167.6 L635.7 159.7 L638.6 157.5 L643.0 154.9 L646.4 153.5 L657.6 149.3 L661.0 148.2 L665.3 147.2 L668.2 146.7 L677.1 145.9 L679.9 145.7 L683.9 146.0 L686.8 146.4 L696.6 148.5 L699.8 149.2 L705.1 150.9 L709.4 152.4 L724.4 158.1 L729.0 159.8 L735.4 162.1 L740.0 163.7 L754.9 169.0 L759.3 170.5 L764.7 172.4 L768.2 173.6 L778.6 177.4 L781.4 178.3 L783.6 179.1 L784.1 179.3 L784.2 179.4 L784.4 179.9 L784.7 180.5 L785.8 182.7 L786.1 183.3 L786.3 183.8 L786.4 183.9 L786.2 185.0 L785.1 190.1 L783.9 196.4 L779.0 220.3 L777.8 226.6 L776.7 231.7 L776.5 232.8 L776.4 232.8 L775.9 233.0 L775.3 233.2 L773.1 233.9 L771.6 234.0 L766.9 233.7 L761.8 233.1 L742.3 230.9 L736.6 230.2 L729.2 229.4 L724.4 228.9 L709.4 227.4 L704.9 226.9 L698.8 225.9 L694.6 225.0 L681.2 222.1 L677.3 221.1 L672.5 219.5 L669.5 218.2 L660.5 213.7 L657.7 212.2 L653.9 209.7 L651.1 207.5 L642.2 200.0 L639.6 197.7 L636.4 194.5 L634.4 192.2 L628.4 184.7 L626.8 182.5 L625.1 180.0 L624.3 178.5 L622.5 174.0 L622.0 172.9 L621.6 171.9Z" fill="none" stroke="#4072ea" stroke-width="14" clip-path="url(#bc1)"/>
<g mask="url(#mk1)"><path d="M621.5 171.7 L621.9 171.3 L623.9 169.6 L626.3 167.6 L635.7 159.7 L638.6 157.5 L643.0 154.9 L646.4 153.5 L657.6 149.3 L661.0 148.2 L665.3 147.2 L668.2 146.7 L677.1 145.9 L679.9 145.7 L683.9 146.0 L686.8 146.4 L696.6 148.5 L699.8 149.2 L705.1 150.9 L709.4 152.4 L724.4 158.1 L729.0 159.8 L735.4 162.1 L740.0 163.7 L754.9 169.0 L759.3 170.5 L764.7 172.4 L768.2 173.6 L778.6 177.4 L781.4 178.3 L783.6 179.1 L784.1 179.3 L784.2 179.4 L784.4 179.9 L784.7 180.5 L785.8 182.7 L786.1 183.3 L786.3 183.8 L786.4 183.9 L786.2 185.0 L785.1 190.1 L783.9 196.4 L779.0 220.3 L777.8 226.6 L776.7 231.7 L776.5 232.8 L776.4 232.8 L775.9 233.0 L775.3 233.2 L773.1 233.9 L771.6 234.0 L766.9 233.7 L761.8 233.1 L742.3 230.9 L736.6 230.2 L729.2 229.4 L724.4 228.9 L709.4 227.4 L704.9 226.9 L698.8 225.9 L694.6 225.0 L681.2 222.1 L677.3 221.1 L672.5 219.5 L669.5 218.2 L660.5 213.7 L657.7 212.2 L653.9 209.7 L651.1 207.5 L642.2 200.0 L639.6 197.7 L636.4 194.5 L634.4 192.2 L628.4 184.7 L626.8 182.5 L625.1 180.0 L624.3 178.5 L622.5 174.0 L622.0 172.9 L621.6 171.9Z" fill="none" stroke="#22409c" stroke-width="14" clip-path="url(#bc1)"/></g>
<path d="M621.5 171.7 L621.9 171.3 L623.9 169.6 L626.3 167.6 L635.7 159.7 L638.6 157.5 L643.0 154.9 L646.4 153.5 L657.6 149.3 L661.0 148.2 L665.3 147.2 L668.2 146.7 L677.1 145.9 L679.9 145.7 L683.9 146.0 L686.8 146.4 L696.6 148.5 L699.8 149.2 L705.1 150.9 L709.4 152.4 L724.4 158.1 L729.0 159.8 L735.4 162.1 L740.0 163.7 L754.9 169.0 L759.3 170.5 L764.7 172.4 L768.2 173.6 L778.6 177.4 L781.4 178.3 L783.6 179.1 L784.1 179.3 L784.2 179.4 L784.4 179.9 L784.7 180.5 L785.8 182.7 L786.1 183.3 L786.3 183.8 L786.4 183.9 L786.2 185.0 L785.1 190.1 L783.9 196.4 L779.0 220.3 L777.8 226.6 L776.7 231.7 L776.5 232.8 L776.4 232.8 L775.9 233.0 L775.3 233.2 L773.1 233.9 L771.6 234.0 L766.9 233.7 L761.8 233.1 L742.3 230.9 L736.6 230.2 L729.2 229.4 L724.4 228.9 L709.4 227.4 L704.9 226.9 L698.8 225.9 L694.6 225.0 L681.2 222.1 L677.3 221.1 L672.5 219.5 L669.5 218.2 L660.5 213.7 L657.7 212.2 L653.9 209.7 L651.1 207.5 L642.2 200.0 L639.6 197.7 L636.4 194.5 L634.4 192.2 L628.4 184.7 L626.8 182.5 L625.1 180.0 L624.3 178.5 L622.5 174.0 L622.0 172.9 L621.6 171.9Z" fill="none" stroke="#3d6de3" stroke-width="9" clip-path="url(#bc1)"/>
<path d="M621.5 171.7 L621.9 171.3 L623.9 169.6 L626.3 167.6 L635.7 159.7 L638.6 157.5 L643.0 154.9 L646.4 153.5 L657.6 149.3 L661.0 148.2 L665.3 147.2 L668.2 146.7 L677.1 145.9 L679.9 145.7 L683.9 146.0 L686.8 146.4 L696.6 148.5 L699.8 149.2 L705.1 150.9 L709.4 152.4 L724.4 158.1 L729.0 159.8 L735.4 162.1 L740.0 163.7 L754.9 169.0 L759.3 170.5 L764.7 172.4 L768.2 173.6 L778.6 177.4 L781.4 178.3 L783.6 179.1 L784.1 179.3 L784.2 179.4 L784.4 179.9 L784.7 180.5 L785.8 182.7 L786.1 183.3 L786.3 183.8 L786.4 183.9 L786.2 185.0 L785.1 190.1 L783.9 196.4 L779.0 220.3 L777.8 226.6 L776.7 231.7 L776.5 232.8 L776.4 232.8 L775.9 233.0 L775.3 233.2 L773.1 233.9 L771.6 234.0 L766.9 233.7 L761.8 233.1 L742.3 230.9 L736.6 230.2 L729.2 229.4 L724.4 228.9 L709.4 227.4 L704.9 226.9 L698.8 225.9 L694.6 225.0 L681.2 222.1 L677.3 221.1 L672.5 219.5 L669.5 218.2 L660.5 213.7 L657.7 212.2 L653.9 209.7 L651.1 207.5 L642.2 200.0 L639.6 197.7 L636.4 194.5 L634.4 192.2 L628.4 184.7 L626.8 182.5 L625.1 180.0 L624.3 178.5 L622.5 174.0 L622.0 172.9 L621.6 171.9Z" fill="none" stroke="#2c52bf" stroke-width="1.6"/>
<path d="M667.7 154.8 L725.0 168.6 L715.8 212.9 L657.8 203.7Z" fill="#2e54bd" clip-path="url(#bc1)"/>
<path d="M662.7 153.3 L720.0 167.1 L710.8 211.4 L652.8 202.2Z" fill="#3f72e8" stroke="#2d52b8" stroke-width="1" stroke-linejoin="round"/>
<circle cx="700.1" cy="185.4" r="10" fill="#4176f0" stroke="#2a4fb4" stroke-width="0.9"/>
<circle cx="700.1" cy="185.4" r="4.2" fill="#1f3c92"/>
<path d="M730.7 185.4 L754.3 188.5 L749.0 214.4 L726.0 206.8Z" fill="none" stroke="#3566d8" stroke-width="1"/>
<path d="M726.0 206.8 L730.7 185.4" stroke="#23409a" stroke-width="2.6" stroke-linecap="square"/>
<path d="M749.0 214.4 L726.0 206.8" stroke="#23409a" stroke-width="2.6" stroke-linecap="square"/>
<circle cx="775" cy="205.3" r="3.6" fill="#4275ec" stroke="#2a4cb0" stroke-width="1"/><circle cx="775" cy="205.3" r="1.5" fill="#24439e"/>
</g>
<g>
<path d="M920.6 119.7 L920.7 120.0 L921.3 121.2 L922.0 122.7 L924.6 128.5 L925.3 130.5 L926.0 134.0 L926.3 137.0 L926.8 147.6 L926.9 150.9 L926.5 155.9 L926.0 159.7 L923.9 172.3 L923.2 176.0 L921.8 180.5 L920.6 183.3 L916.4 191.8 L914.9 194.6 L911.9 199.1 L909.3 202.8 L899.7 215.4 L896.7 219.2 L891.9 224.2 L888.2 227.5 L875.5 238.0 L871.8 241.1 L867.0 244.9 L864.0 247.4 L854.4 254.7 L851.8 256.7 L849.1 258.3 L847.9 258.6 L844.7 258.6 L843.9 258.6 L843.2 258.6 L843.1 258.6 L842.3 257.8 L838.4 254.2 L833.8 249.8 L815.8 233.0 L811.2 228.6 L807.3 225.0 L806.5 224.2 L806.5 224.1 L806.6 223.6 L806.8 223.1 L807.2 220.9 L808.0 219.5 L810.9 215.0 L814.4 209.9 L827.6 191.0 L831.6 185.1 L836.9 176.8 L840.5 170.7 L852.2 150.6 L855.5 145.2 L859.3 140.0 L861.5 138.0 L867.8 133.7 L870.0 132.4 L873.8 130.6 L877.1 129.3 L888.8 125.1 L892.2 123.9 L896.5 122.7 L899.2 122.1 L907.6 120.5 L910.0 120.1 L912.7 119.8 L914.2 119.7 L918.4 119.7 L919.5 119.7 L920.4 119.7Z" fill="#3c6bdf"/>
<path d="M920.6 119.7 L920.7 120.0 L921.3 121.2 L922.0 122.7 L924.6 128.5 L925.3 130.5 L926.0 134.0 L926.3 137.0 L926.8 147.6 L926.9 150.9 L926.5 155.9 L926.0 159.7 L923.9 172.3 L923.2 176.0 L921.8 180.5 L920.6 183.3 L916.4 191.8 L914.9 194.6 L911.9 199.1 L909.3 202.8 L899.7 215.4 L896.7 219.2 L891.9 224.2 L888.2 227.5 L875.5 238.0 L871.8 241.1 L867.0 244.9 L864.0 247.4 L854.4 254.7 L851.8 256.7 L849.1 258.3 L847.9 258.6 L844.7 258.6 L843.9 258.6 L843.2 258.6 L843.1 258.6 L842.3 257.8 L838.4 254.2 L833.8 249.8 L815.8 233.0 L811.2 228.6 L807.3 225.0 L806.5 224.2 L806.5 224.1 L806.6 223.6 L806.8 223.1 L807.2 220.9 L808.0 219.5 L810.9 215.0 L814.4 209.9 L827.6 191.0 L831.6 185.1 L836.9 176.8 L840.5 170.7 L852.2 150.6 L855.5 145.2 L859.3 140.0 L861.5 138.0 L867.8 133.7 L870.0 132.4 L873.8 130.6 L877.1 129.3 L888.8 125.1 L892.2 123.9 L896.5 122.7 L899.2 122.1 L907.6 120.5 L910.0 120.1 L912.7 119.8 L914.2 119.7 L918.4 119.7 L919.5 119.7 L920.4 119.7Z" fill="none" stroke="#4072ea" stroke-width="14" clip-path="url(#bc2)"/>
<g mask="url(#mk2)"><path d="M920.6 119.7 L920.7 120.0 L921.3 121.2 L922.0 122.7 L924.6 128.5 L925.3 130.5 L926.0 134.0 L926.3 137.0 L926.8 147.6 L926.9 150.9 L926.5 155.9 L926.0 159.7 L923.9 172.3 L923.2 176.0 L921.8 180.5 L920.6 183.3 L916.4 191.8 L914.9 194.6 L911.9 199.1 L909.3 202.8 L899.7 215.4 L896.7 219.2 L891.9 224.2 L888.2 227.5 L875.5 238.0 L871.8 241.1 L867.0 244.9 L864.0 247.4 L854.4 254.7 L851.8 256.7 L849.1 258.3 L847.9 258.6 L844.7 258.6 L843.9 258.6 L843.2 258.6 L843.1 258.6 L842.3 257.8 L838.4 254.2 L833.8 249.8 L815.8 233.0 L811.2 228.6 L807.3 225.0 L806.5 224.2 L806.5 224.1 L806.6 223.6 L806.8 223.1 L807.2 220.9 L808.0 219.5 L810.9 215.0 L814.4 209.9 L827.6 191.0 L831.6 185.1 L836.9 176.8 L840.5 170.7 L852.2 150.6 L855.5 145.2 L859.3 140.0 L861.5 138.0 L867.8 133.7 L870.0 132.4 L873.8 130.6 L877.1 129.3 L888.8 125.1 L892.2 123.9 L896.5 122.7 L899.2 122.1 L907.6 120.5 L910.0 120.1 L912.7 119.8 L914.2 119.7 L918.4 119.7 L919.5 119.7 L920.4 119.7Z" fill="none" stroke="#22409c" stroke-width="14" clip-path="url(#bc2)"/></g>
<path d="M920.6 119.7 L920.7 120.0 L921.3 121.2 L922.0 122.7 L924.6 128.5 L925.3 130.5 L926.0 134.0 L926.3 137.0 L926.8 147.6 L926.9 150.9 L926.5 155.9 L926.0 159.7 L923.9 172.3 L923.2 176.0 L921.8 180.5 L920.6 183.3 L916.4 191.8 L914.9 194.6 L911.9 199.1 L909.3 202.8 L899.7 215.4 L896.7 219.2 L891.9 224.2 L888.2 227.5 L875.5 238.0 L871.8 241.1 L867.0 244.9 L864.0 247.4 L854.4 254.7 L851.8 256.7 L849.1 258.3 L847.9 258.6 L844.7 258.6 L843.9 258.6 L843.2 258.6 L843.1 258.6 L842.3 257.8 L838.4 254.2 L833.8 249.8 L815.8 233.0 L811.2 228.6 L807.3 225.0 L806.5 224.2 L806.5 224.1 L806.6 223.6 L806.8 223.1 L807.2 220.9 L808.0 219.5 L810.9 215.0 L814.4 209.9 L827.6 191.0 L831.6 185.1 L836.9 176.8 L840.5 170.7 L852.2 150.6 L855.5 145.2 L859.3 140.0 L861.5 138.0 L867.8 133.7 L870.0 132.4 L873.8 130.6 L877.1 129.3 L888.8 125.1 L892.2 123.9 L896.5 122.7 L899.2 122.1 L907.6 120.5 L910.0 120.1 L912.7 119.8 L914.2 119.7 L918.4 119.7 L919.5 119.7 L920.4 119.7Z" fill="none" stroke="#3d6de3" stroke-width="9" clip-path="url(#bc2)"/>
<path d="M920.6 119.7 L920.7 120.0 L921.3 121.2 L922.0 122.7 L924.6 128.5 L925.3 130.5 L926.0 134.0 L926.3 137.0 L926.8 147.6 L926.9 150.9 L926.5 155.9 L926.0 159.7 L923.9 172.3 L923.2 176.0 L921.8 180.5 L920.6 183.3 L916.4 191.8 L914.9 194.6 L911.9 199.1 L909.3 202.8 L899.7 215.4 L896.7 219.2 L891.9 224.2 L888.2 227.5 L875.5 238.0 L871.8 241.1 L867.0 244.9 L864.0 247.4 L854.4 254.7 L851.8 256.7 L849.1 258.3 L847.9 258.6 L844.7 258.6 L843.9 258.6 L843.2 258.6 L843.1 258.6 L842.3 257.8 L838.4 254.2 L833.8 249.8 L815.8 233.0 L811.2 228.6 L807.3 225.0 L806.5 224.2 L806.5 224.1 L806.6 223.6 L806.8 223.1 L807.2 220.9 L808.0 219.5 L810.9 215.0 L814.4 209.9 L827.6 191.0 L831.6 185.1 L836.9 176.8 L840.5 170.7 L852.2 150.6 L855.5 145.2 L859.3 140.0 L861.5 138.0 L867.8 133.7 L870.0 132.4 L873.8 130.6 L877.1 129.3 L888.8 125.1 L892.2 123.9 L896.5 122.7 L899.2 122.1 L907.6 120.5 L910.0 120.1 L912.7 119.8 L914.2 119.7 L918.4 119.7 L919.5 119.7 L920.4 119.7Z" fill="none" stroke="#2c52bf" stroke-width="1.6"/>
<path d="M873.9 137.3 L912.7 169.7 L873.9 212.7 L839.5 182.6Z" fill="#2e54bd" clip-path="url(#bc2)"/>
<path d="M868.9 135.8 L907.7 168.2 L868.9 211.2 L834.5 181.1Z" fill="#3f72e8" stroke="#2d52b8" stroke-width="1" stroke-linejoin="round"/>
<circle cx="856" cy="185.4" r="9" fill="#4176f0" stroke="#2a4fb4" stroke-width="0.9"/>
<circle cx="856" cy="185.4" r="3.8" fill="#1f3c92"/>
<path d="M847.4 200.5 L864.6 209.1 L853.8 226.3 L838.8 215.5Z" fill="none" stroke="#3566d8" stroke-width="1"/>
<path d="M838.8 215.5 L847.4 200.5" stroke="#23409a" stroke-width="2.6" stroke-linecap="square"/>
<path d="M853.8 226.3 L838.8 215.5" stroke="#23409a" stroke-width="2.6" stroke-linecap="square"/>
<circle cx="830.2" cy="239.2" r="3.6" fill="#4275ec" stroke="#2a4cb0" stroke-width="1"/><circle cx="830.2" cy="239.2" r="1.5" fill="#24439e"/>
</g>
<g>
<path d="M1028.1 279.9 L1027.6 279.7 L1025.3 278.7 L1022.6 277.6 L1011.9 273.1 L1008.6 271.9 L1003.7 270.9 L999.9 270.6 L987.6 270.1 L983.9 270.2 L979.1 270.7 L976.1 271.5 L966.3 274.7 L963.2 275.9 L958.3 278.7 L954.4 281.3 L941.1 291.1 L937.0 294.1 L931.4 298.4 L927.3 301.6 L914.0 312.3 L910.1 315.4 L905.2 319.1 L902.0 321.5 L892.3 328.5 L889.7 330.4 L887.6 331.9 L887.2 332.2 L887.2 332.4 L887.1 333.1 L887.0 334.1 L886.5 337.6 L886.4 338.6 L886.3 339.3 L886.3 339.5 L886.9 340.4 L889.6 344.8 L893.0 350.1 L905.8 370.4 L909.2 375.7 L911.9 380.1 L912.5 381.0 L912.6 381.0 L913.0 381.0 L913.4 381.0 L915.2 381.0 L916.5 380.6 L920.6 378.9 L925.3 376.8 L943.0 368.9 L948.4 366.4 L956.0 363.0 L961.4 360.6 L979.2 352.6 L984.2 350.3 L989.9 347.2 L993.0 345.3 L1001.8 339.0 L1004.4 336.9 L1007.8 333.3 L1010.1 330.3 L1017.2 319.7 L1019.3 316.5 L1021.7 311.9 L1023.2 308.7 L1027.6 298.0 L1028.7 295.0 L1029.5 291.4 L1029.4 289.3 L1028.6 283.1 L1028.3 281.5 L1028.1 280.2Z" fill="#3c6bdf"/>
<path d="M1028.1 279.9 L1027.6 279.7 L1025.3 278.7 L1022.6 277.6 L1011.9 273.1 L1008.6 271.9 L1003.7 270.9 L999.9 270.6 L987.6 270.1 L983.9 270.2 L979.1 270.7 L976.1 271.5 L966.3 274.7 L963.2 275.9 L958.3 278.7 L954.4 281.3 L941.1 291.1 L937.0 294.1 L931.4 298.4 L927.3 301.6 L914.0 312.3 L910.1 315.4 L905.2 319.1 L902.0 321.5 L892.3 328.5 L889.7 330.4 L887.6 331.9 L887.2 332.2 L887.2 332.4 L887.1 333.1 L887.0 334.1 L886.5 337.6 L886.4 338.6 L886.3 339.3 L886.3 339.5 L886.9 340.4 L889.6 344.8 L893.0 350.1 L905.8 370.4 L909.2 375.7 L911.9 380.1 L912.5 381.0 L912.6 381.0 L913.0 381.0 L913.4 381.0 L915.2 381.0 L916.5 380.6 L920.6 378.9 L925.3 376.8 L943.0 368.9 L948.4 366.4 L956.0 363.0 L961.4 360.6 L979.2 352.6 L984.2 350.3 L989.9 347.2 L993.0 345.3 L1001.8 339.0 L1004.4 336.9 L1007.8 333.3 L1010.1 330.3 L1017.2 319.7 L1019.3 316.5 L1021.7 311.9 L1023.2 308.7 L1027.6 298.0 L1028.7 295.0 L1029.5 291.4 L1029.4 289.3 L1028.6 283.1 L1028.3 281.5 L1028.1 280.2Z" fill="none" stroke="#4072ea" stroke-width="14" clip-path="url(#bc3)"/>
<g mask="url(#mk3)"><path d="M1028.1 279.9 L1027.6 279.7 L1025.3 278.7 L1022.6 277.6 L1011.9 273.1 L1008.6 271.9 L1003.7 270.9 L999.9 270.6 L987.6 270.1 L983.9 270.2 L979.1 270.7 L976.1 271.5 L966.3 274.7 L963.2 275.9 L958.3 278.7 L954.4 281.3 L941.1 291.1 L937.0 294.1 L931.4 298.4 L927.3 301.6 L914.0 312.3 L910.1 315.4 L905.2 319.1 L902.0 321.5 L892.3 328.5 L889.7 330.4 L887.6 331.9 L887.2 332.2 L887.2 332.4 L887.1 333.1 L887.0 334.1 L886.5 337.6 L886.4 338.6 L886.3 339.3 L886.3 339.5 L886.9 340.4 L889.6 344.8 L893.0 350.1 L905.8 370.4 L909.2 375.7 L911.9 380.1 L912.5 381.0 L912.6 381.0 L913.0 381.0 L913.4 381.0 L915.2 381.0 L916.5 380.6 L920.6 378.9 L925.3 376.8 L943.0 368.9 L948.4 366.4 L956.0 363.0 L961.4 360.6 L979.2 352.6 L984.2 350.3 L989.9 347.2 L993.0 345.3 L1001.8 339.0 L1004.4 336.9 L1007.8 333.3 L1010.1 330.3 L1017.2 319.7 L1019.3 316.5 L1021.7 311.9 L1023.2 308.7 L1027.6 298.0 L1028.7 295.0 L1029.5 291.4 L1029.4 289.3 L1028.6 283.1 L1028.3 281.5 L1028.1 280.2Z" fill="none" stroke="#22409c" stroke-width="14" clip-path="url(#bc3)"/></g>
<path d="M1028.1 279.9 L1027.6 279.7 L1025.3 278.7 L1022.6 277.6 L1011.9 273.1 L1008.6 271.9 L1003.7 270.9 L999.9 270.6 L987.6 270.1 L983.9 270.2 L979.1 270.7 L976.1 271.5 L966.3 274.7 L963.2 275.9 L958.3 278.7 L954.4 281.3 L941.1 291.1 L937.0 294.1 L931.4 298.4 L927.3 301.6 L914.0 312.3 L910.1 315.4 L905.2 319.1 L902.0 321.5 L892.3 328.5 L889.7 330.4 L887.6 331.9 L887.2 332.2 L887.2 332.4 L887.1 333.1 L887.0 334.1 L886.5 337.6 L886.4 338.6 L886.3 339.3 L886.3 339.5 L886.9 340.4 L889.6 344.8 L893.0 350.1 L905.8 370.4 L909.2 375.7 L911.9 380.1 L912.5 381.0 L912.6 381.0 L913.0 381.0 L913.4 381.0 L915.2 381.0 L916.5 380.6 L920.6 378.9 L925.3 376.8 L943.0 368.9 L948.4 366.4 L956.0 363.0 L961.4 360.6 L979.2 352.6 L984.2 350.3 L989.9 347.2 L993.0 345.3 L1001.8 339.0 L1004.4 336.9 L1007.8 333.3 L1010.1 330.3 L1017.2 319.7 L1019.3 316.5 L1021.7 311.9 L1023.2 308.7 L1027.6 298.0 L1028.7 295.0 L1029.5 291.4 L1029.4 289.3 L1028.6 283.1 L1028.3 281.5 L1028.1 280.2Z" fill="none" stroke="#3d6de3" stroke-width="9" clip-path="url(#bc3)"/>
<path d="M1028.1 279.9 L1027.6 279.7 L1025.3 278.7 L1022.6 277.6 L1011.9 273.1 L1008.6 271.9 L1003.7 270.9 L999.9 270.6 L987.6 270.1 L983.9 270.2 L979.1 270.7 L976.1 271.5 L966.3 274.7 L963.2 275.9 L958.3 278.7 L954.4 281.3 L941.1 291.1 L937.0 294.1 L931.4 298.4 L927.3 301.6 L914.0 312.3 L910.1 315.4 L905.2 319.1 L902.0 321.5 L892.3 328.5 L889.7 330.4 L887.6 331.9 L887.2 332.2 L887.2 332.4 L887.1 333.1 L887.0 334.1 L886.5 337.6 L886.4 338.6 L886.3 339.3 L886.3 339.5 L886.9 340.4 L889.6 344.8 L893.0 350.1 L905.8 370.4 L909.2 375.7 L911.9 380.1 L912.5 381.0 L912.6 381.0 L913.0 381.0 L913.4 381.0 L915.2 381.0 L916.5 380.6 L920.6 378.9 L925.3 376.8 L943.0 368.9 L948.4 366.4 L956.0 363.0 L961.4 360.6 L979.2 352.6 L984.2 350.3 L989.9 347.2 L993.0 345.3 L1001.8 339.0 L1004.4 336.9 L1007.8 333.3 L1010.1 330.3 L1017.2 319.7 L1019.3 316.5 L1021.7 311.9 L1023.2 308.7 L1027.6 298.0 L1028.7 295.0 L1029.5 291.4 L1029.4 289.3 L1028.6 283.1 L1028.3 281.5 L1028.1 280.2Z" fill="none" stroke="#2c52bf" stroke-width="1.6"/>
<path d="M932.0 312.1 L980.7 281.4 L1005.1 325.6 L953.6 351.8Z" fill="#2e54bd" clip-path="url(#bc3)"/>
<path d="M927.0 310.6 L975.7 279.9 L1000.1 324.1 L948.6 350.3Z" fill="#3f72e8" stroke="#2d52b8" stroke-width="1" stroke-linejoin="round"/>
<circle cx="945" cy="324.1" r="9" fill="#4176f0" stroke="#2a4fb4" stroke-width="0.9"/>
<circle cx="945" cy="324.1" r="3.8" fill="#1f3c92"/>
<path d="M921.5 332.2 L934.2 326.8 L937.0 350.0 L922.0 354.0Z" fill="none" stroke="#3566d8" stroke-width="1"/>
<path d="M922.0 354.0 L921.5 332.2" stroke="#23409a" stroke-width="2.6" stroke-linecap="square"/>
<path d="M921.5 332.2 L934.2 326.8" stroke="#23409a" stroke-width="2.6" stroke-linecap="square"/>
<circle cx="901.7" cy="356.6" r="3.6" fill="#4275ec" stroke="#2a4cb0" stroke-width="1"/><circle cx="901.7" cy="356.6" r="1.5" fill="#24439e"/>
</g>
<g>
<path d="M811.4 292.8 L811.6 293.1 L812.4 294.8 L813.4 296.8 L817.2 304.3 L818.2 306.9 L819.0 311.2 L819.2 314.8 L819.2 327.1 L819.0 330.9 L818.0 336.3 L816.7 340.1 L811.9 352.4 L810.3 356.1 L807.6 360.6 L805.4 363.4 L797.9 371.9 L795.3 374.6 L790.8 378.5 L787.0 381.3 L773.6 390.9 L769.4 393.9 L762.8 398.3 L757.8 401.8 L740.6 413.2 L736.1 416.2 L731.9 418.8 L730.5 419.4 L728.0 419.9 L727.4 420.0 L726.9 420.1 L726.8 420.1 L726.0 419.2 L722.1 415.3 L717.4 410.4 L699.3 391.9 L694.6 387.0 L690.7 383.1 L689.9 382.2 L689.9 382.1 L689.9 381.7 L689.9 381.2 L689.9 379.3 L689.9 378.8 L689.9 378.4 L689.9 378.3 L690.7 377.4 L694.2 373.1 L698.6 367.9 L715.2 347.9 L720.1 342.0 L726.4 334.2 L730.4 329.1 L742.7 312.8 L746.4 308.4 L750.9 304.2 L753.7 302.4 L762.2 298.7 L765.1 297.6 L769.8 296.2 L773.6 295.5 L787.0 293.0 L790.8 292.4 L795.5 292.0 L798.4 292.1 L806.9 292.5 L809.2 292.7 L811.0 292.8Z" fill="none" stroke="#e4e8ee" stroke-width="2.8"/>
<path d="M811.4 292.8 L811.6 293.1 L812.4 294.8 L813.4 296.8 L817.2 304.3 L818.2 306.9 L819.0 311.2 L819.2 314.8 L819.2 327.1 L819.0 330.9 L818.0 336.3 L816.7 340.1 L811.9 352.4 L810.3 356.1 L807.6 360.6 L805.4 363.4 L797.9 371.9 L795.3 374.6 L790.8 378.5 L787.0 381.3 L773.6 390.9 L769.4 393.9 L762.8 398.3 L757.8 401.8 L740.6 413.2 L736.1 416.2 L731.9 418.8 L730.5 419.4 L728.0 419.9 L727.4 420.0 L726.9 420.1 L726.8 420.1 L726.0 419.2 L722.1 415.3 L717.4 410.4 L699.3 391.9 L694.6 387.0 L690.7 383.1 L689.9 382.2 L689.9 382.1 L689.9 381.7 L689.9 381.2 L689.9 379.3 L689.9 378.8 L689.9 378.4 L689.9 378.3 L690.7 377.4 L694.2 373.1 L698.6 367.9 L715.2 347.9 L720.1 342.0 L726.4 334.2 L730.4 329.1 L742.7 312.8 L746.4 308.4 L750.9 304.2 L753.7 302.4 L762.2 298.7 L765.1 297.6 L769.8 296.2 L773.6 295.5 L787.0 293.0 L790.8 292.4 L795.5 292.0 L798.4 292.1 L806.9 292.5 L809.2 292.7 L811.0 292.8Z" fill="#3c6bdf"/>
<path d="M811.4 292.8 L811.6 293.1 L812.4 294.8 L813.4 296.8 L817.2 304.3 L818.2 306.9 L819.0 311.2 L819.2 314.8 L819.2 327.1 L819.0 330.9 L818.0 336.3 L816.7 340.1 L811.9 352.4 L810.3 356.1 L807.6 360.6 L805.4 363.4 L797.9 371.9 L795.3 374.6 L790.8 378.5 L787.0 381.3 L773.6 390.9 L769.4 393.9 L762.8 398.3 L757.8 401.8 L740.6 413.2 L736.1 416.2 L731.9 418.8 L730.5 419.4 L728.0 419.9 L727.4 420.0 L726.9 420.1 L726.8 420.1 L726.0 419.2 L722.1 415.3 L717.4 410.4 L699.3 391.9 L694.6 387.0 L690.7 383.1 L689.9 382.2 L689.9 382.1 L689.9 381.7 L689.9 381.2 L689.9 379.3 L689.9 378.8 L689.9 378.4 L689.9 378.3 L690.7 377.4 L694.2 373.1 L698.6 367.9 L715.2 347.9 L720.1 342.0 L726.4 334.2 L730.4 329.1 L742.7 312.8 L746.4 308.4 L750.9 304.2 L753.7 302.4 L762.2 298.7 L765.1 297.6 L769.8 296.2 L773.6 295.5 L787.0 293.0 L790.8 292.4 L795.5 292.0 L798.4 292.1 L806.9 292.5 L809.2 292.7 L811.0 292.8Z" fill="none" stroke="#4072ea" stroke-width="14" clip-path="url(#bc4)"/>
<g mask="url(#mk4)"><path d="M811.4 292.8 L811.6 293.1 L812.4 294.8 L813.4 296.8 L817.2 304.3 L818.2 306.9 L819.0 311.2 L819.2 314.8 L819.2 327.1 L819.0 330.9 L818.0 336.3 L816.7 340.1 L811.9 352.4 L810.3 356.1 L807.6 360.6 L805.4 363.4 L797.9 371.9 L795.3 374.6 L790.8 378.5 L787.0 381.3 L773.6 390.9 L769.4 393.9 L762.8 398.3 L757.8 401.8 L740.6 413.2 L736.1 416.2 L731.9 418.8 L730.5 419.4 L728.0 419.9 L727.4 420.0 L726.9 420.1 L726.8 420.1 L726.0 419.2 L722.1 415.3 L717.4 410.4 L699.3 391.9 L694.6 387.0 L690.7 383.1 L689.9 382.2 L689.9 382.1 L689.9 381.7 L689.9 381.2 L689.9 379.3 L689.9 378.8 L689.9 378.4 L689.9 378.3 L690.7 377.4 L694.2 373.1 L698.6 367.9 L715.2 347.9 L720.1 342.0 L726.4 334.2 L730.4 329.1 L742.7 312.8 L746.4 308.4 L750.9 304.2 L753.7 302.4 L762.2 298.7 L765.1 297.6 L769.8 296.2 L773.6 295.5 L787.0 293.0 L790.8 292.4 L795.5 292.0 L798.4 292.1 L806.9 292.5 L809.2 292.7 L811.0 292.8Z" fill="none" stroke="#22409c" stroke-width="14" clip-path="url(#bc4)"/></g>
<path d="M811.4 292.8 L811.6 293.1 L812.4 294.8 L813.4 296.8 L817.2 304.3 L818.2 306.9 L819.0 311.2 L819.2 314.8 L819.2 327.1 L819.0 330.9 L818.0 336.3 L816.7 340.1 L811.9 352.4 L810.3 356.1 L807.6 360.6 L805.4 363.4 L797.9 371.9 L795.3 374.6 L790.8 378.5 L787.0 381.3 L773.6 390.9 L769.4 393.9 L762.8 398.3 L757.8 401.8 L740.6 413.2 L736.1 416.2 L731.9 418.8 L730.5 419.4 L728.0 419.9 L727.4 420.0 L726.9 420.1 L726.8 420.1 L726.0 419.2 L722.1 415.3 L717.4 410.4 L699.3 391.9 L694.6 387.0 L690.7 383.1 L689.9 382.2 L689.9 382.1 L689.9 381.7 L689.9 381.2 L689.9 379.3 L689.9 378.8 L689.9 378.4 L689.9 378.3 L690.7 377.4 L694.2 373.1 L698.6 367.9 L715.2 347.9 L720.1 342.0 L726.4 334.2 L730.4 329.1 L742.7 312.8 L746.4 308.4 L750.9 304.2 L753.7 302.4 L762.2 298.7 L765.1 297.6 L769.8 296.2 L773.6 295.5 L787.0 293.0 L790.8 292.4 L795.5 292.0 L798.4 292.1 L806.9 292.5 L809.2 292.7 L811.0 292.8Z" fill="none" stroke="#3d6de3" stroke-width="9" clip-path="url(#bc4)"/>
<path d="M811.4 292.8 L811.6 293.1 L812.4 294.8 L813.4 296.8 L817.2 304.3 L818.2 306.9 L819.0 311.2 L819.2 314.8 L819.2 327.1 L819.0 330.9 L818.0 336.3 L816.7 340.1 L811.9 352.4 L810.3 356.1 L807.6 360.6 L805.4 363.4 L797.9 371.9 L795.3 374.6 L790.8 378.5 L787.0 381.3 L773.6 390.9 L769.4 393.9 L762.8 398.3 L757.8 401.8 L740.6 413.2 L736.1 416.2 L731.9 418.8 L730.5 419.4 L728.0 419.9 L727.4 420.0 L726.9 420.1 L726.8 420.1 L726.0 419.2 L722.1 415.3 L717.4 410.4 L699.3 391.9 L694.6 387.0 L690.7 383.1 L689.9 382.2 L689.9 382.1 L689.9 381.7 L689.9 381.2 L689.9 379.3 L689.9 378.8 L689.9 378.4 L689.9 378.3 L690.7 377.4 L694.2 373.1 L698.6 367.9 L715.2 347.9 L720.1 342.0 L726.4 334.2 L730.4 329.1 L742.7 312.8 L746.4 308.4 L750.9 304.2 L753.7 302.4 L762.2 298.7 L765.1 297.6 L769.8 296.2 L773.6 295.5 L787.0 293.0 L790.8 292.4 L795.5 292.0 L798.4 292.1 L806.9 292.5 L809.2 292.7 L811.0 292.8Z" fill="none" stroke="#2c52bf" stroke-width="1.6"/>
<path d="M764.9 306.9 L797.9 344.8 L755.1 383.7 L723.1 349.7Z" fill="#2e54bd" clip-path="url(#bc4)"/>
<path d="M759.9 305.4 L792.9 343.3 L750.1 382.2 L718.1 348.2Z" fill="#3f72e8" stroke="#2d52b8" stroke-width="1" stroke-linejoin="round"/>
<circle cx="738.5" cy="355" r="9" fill="#4176f0" stroke="#2a4fb4" stroke-width="0.9"/>
<circle cx="738.5" cy="355" r="3.8" fill="#1f3c92"/>
<path d="M723.9 372.0 L733.0 366.0 L741.4 384.2 L730.0 389.0Z" fill="none" stroke="#3566d8" stroke-width="1"/>
<path d="M730.0 389.0 L723.9 372.0" stroke="#23409a" stroke-width="2.6" stroke-linecap="square"/>
<path d="M723.9 372.0 L733.0 366.0" stroke="#23409a" stroke-width="2.6" stroke-linecap="square"/>
<circle cx="712.2" cy="396.8" r="3.6" fill="#4275ec" stroke="#2a4cb0" stroke-width="1"/><circle cx="712.2" cy="396.8" r="1.5" fill="#24439e"/>
</g>
<g>
<path d="M658.3 329.7 L658.4 330.0 L659.1 331.2 L659.8 332.7 L662.7 338.4 L663.4 340.3 L664.1 343.4 L664.2 345.9 L664.2 354.4 L664.1 357.2 L663.4 361.5 L662.7 364.8 L659.8 376.3 L658.8 379.7 L657.0 384.2 L655.3 387.2 L649.7 396.7 L647.7 399.7 L644.0 403.7 L640.7 406.6 L629.3 416.2 L625.5 419.1 L619.4 423.1 L614.4 426.1 L597.2 435.6 L592.5 438.4 L587.4 441.9 L584.8 444.1 L578.2 450.7 L576.4 452.5 L575.0 453.9 L574.7 454.2 L574.6 454.2 L574.0 454.2 L573.2 454.2 L570.4 454.2 L569.6 454.2 L569.0 454.2 L568.9 454.2 L568.2 453.4 L564.9 449.5 L561.0 444.8 L545.7 426.6 L541.8 421.9 L538.5 418.0 L537.8 417.2 L537.8 417.1 L537.8 416.7 L537.8 416.2 L537.8 414.3 L537.8 413.8 L537.8 413.4 L537.8 413.3 L538.4 412.7 L541.0 409.8 L544.2 406.4 L556.6 393.0 L560.4 388.9 L565.7 382.7 L569.5 378.2 L581.8 362.9 L585.3 358.6 L589.0 353.7 L590.8 351.0 L595.6 343.4 L597.3 341.2 L600.4 338.6 L603.0 337.2 L612.6 332.9 L615.5 331.7 L619.8 330.5 L623.0 330.0 L633.4 328.5 L636.6 328.2 L640.9 328.1 L643.8 328.3 L653.4 329.2 L655.8 329.5 L657.9 329.7Z" fill="#3c6bdf"/>
<path d="M658.3 329.7 L658.4 330.0 L659.1 331.2 L659.8 332.7 L662.7 338.4 L663.4 340.3 L664.1 343.4 L664.2 345.9 L664.2 354.4 L664.1 357.2 L663.4 361.5 L662.7 364.8 L659.8 376.3 L658.8 379.7 L657.0 384.2 L655.3 387.2 L649.7 396.7 L647.7 399.7 L644.0 403.7 L640.7 406.6 L629.3 416.2 L625.5 419.1 L619.4 423.1 L614.4 426.1 L597.2 435.6 L592.5 438.4 L587.4 441.9 L584.8 444.1 L578.2 450.7 L576.4 452.5 L575.0 453.9 L574.7 454.2 L574.6 454.2 L574.0 454.2 L573.2 454.2 L570.4 454.2 L569.6 454.2 L569.0 454.2 L568.9 454.2 L568.2 453.4 L564.9 449.5 L561.0 444.8 L545.7 426.6 L541.8 421.9 L538.5 418.0 L537.8 417.2 L537.8 417.1 L537.8 416.7 L537.8 416.2 L537.8 414.3 L537.8 413.8 L537.8 413.4 L537.8 413.3 L538.4 412.7 L541.0 409.8 L544.2 406.4 L556.6 393.0 L560.4 388.9 L565.7 382.7 L569.5 378.2 L581.8 362.9 L585.3 358.6 L589.0 353.7 L590.8 351.0 L595.6 343.4 L597.3 341.2 L600.4 338.6 L603.0 337.2 L612.6 332.9 L615.5 331.7 L619.8 330.5 L623.0 330.0 L633.4 328.5 L636.6 328.2 L640.9 328.1 L643.8 328.3 L653.4 329.2 L655.8 329.5 L657.9 329.7Z" fill="none" stroke="#4072ea" stroke-width="14" clip-path="url(#bc5)"/>
<g mask="url(#mk5)"><path d="M658.3 329.7 L658.4 330.0 L659.1 331.2 L659.8 332.7 L662.7 338.4 L663.4 340.3 L664.1 343.4 L664.2 345.9 L664.2 354.4 L664.1 357.2 L663.4 361.5 L662.7 364.8 L659.8 376.3 L658.8 379.7 L657.0 384.2 L655.3 387.2 L649.7 396.7 L647.7 399.7 L644.0 403.7 L640.7 406.6 L629.3 416.2 L625.5 419.1 L619.4 423.1 L614.4 426.1 L597.2 435.6 L592.5 438.4 L587.4 441.9 L584.8 444.1 L578.2 450.7 L576.4 452.5 L575.0 453.9 L574.7 454.2 L574.6 454.2 L574.0 454.2 L573.2 454.2 L570.4 454.2 L569.6 454.2 L569.0 454.2 L568.9 454.2 L568.2 453.4 L564.9 449.5 L561.0 444.8 L545.7 426.6 L541.8 421.9 L538.5 418.0 L537.8 417.2 L537.8 417.1 L537.8 416.7 L537.8 416.2 L537.8 414.3 L537.8 413.8 L537.8 413.4 L537.8 413.3 L538.4 412.7 L541.0 409.8 L544.2 406.4 L556.6 393.0 L560.4 388.9 L565.7 382.7 L569.5 378.2 L581.8 362.9 L585.3 358.6 L589.0 353.7 L590.8 351.0 L595.6 343.4 L597.3 341.2 L600.4 338.6 L603.0 337.2 L612.6 332.9 L615.5 331.7 L619.8 330.5 L623.0 330.0 L633.4 328.5 L636.6 328.2 L640.9 328.1 L643.8 328.3 L653.4 329.2 L655.8 329.5 L657.9 329.7Z" fill="none" stroke="#22409c" stroke-width="14" clip-path="url(#bc5)"/></g>
<path d="M658.3 329.7 L658.4 330.0 L659.1 331.2 L659.8 332.7 L662.7 338.4 L663.4 340.3 L664.1 343.4 L664.2 345.9 L664.2 354.4 L664.1 357.2 L663.4 361.5 L662.7 364.8 L659.8 376.3 L658.8 379.7 L657.0 384.2 L655.3 387.2 L649.7 396.7 L647.7 399.7 L644.0 403.7 L640.7 406.6 L629.3 416.2 L625.5 419.1 L619.4 423.1 L614.4 426.1 L597.2 435.6 L592.5 438.4 L587.4 441.9 L584.8 444.1 L578.2 450.7 L576.4 452.5 L575.0 453.9 L574.7 454.2 L574.6 454.2 L574.0 454.2 L573.2 454.2 L570.4 454.2 L569.6 454.2 L569.0 454.2 L568.9 454.2 L568.2 453.4 L564.9 449.5 L561.0 444.8 L545.7 426.6 L541.8 421.9 L538.5 418.0 L537.8 417.2 L537.8 417.1 L537.8 416.7 L537.8 416.2 L537.8 414.3 L537.8 413.8 L537.8 413.4 L537.8 413.3 L538.4 412.7 L541.0 409.8 L544.2 406.4 L556.6 393.0 L560.4 388.9 L565.7 382.7 L569.5 378.2 L581.8 362.9 L585.3 358.6 L589.0 353.7 L590.8 351.0 L595.6 343.4 L597.3 341.2 L600.4 338.6 L603.0 337.2 L612.6 332.9 L615.5 331.7 L619.8 330.5 L623.0 330.0 L633.4 328.5 L636.6 328.2 L640.9 328.1 L643.8 328.3 L653.4 329.2 L655.8 329.5 L657.9 329.7Z" fill="none" stroke="#3d6de3" stroke-width="9" clip-path="url(#bc5)"/>
<path d="M658.3 329.7 L658.4 330.0 L659.1 331.2 L659.8 332.7 L662.7 338.4 L663.4 340.3 L664.1 343.4 L664.2 345.9 L664.2 354.4 L664.1 357.2 L663.4 361.5 L662.7 364.8 L659.8 376.3 L658.8 379.7 L657.0 384.2 L655.3 387.2 L649.7 396.7 L647.7 399.7 L644.0 403.7 L640.7 406.6 L629.3 416.2 L625.5 419.1 L619.4 423.1 L614.4 426.1 L597.2 435.6 L592.5 438.4 L587.4 441.9 L584.8 444.1 L578.2 450.7 L576.4 452.5 L575.0 453.9 L574.7 454.2 L574.6 454.2 L574.0 454.2 L573.2 454.2 L570.4 454.2 L569.6 454.2 L569.0 454.2 L568.9 454.2 L568.2 453.4 L564.9 449.5 L561.0 444.8 L545.7 426.6 L541.8 421.9 L538.5 418.0 L537.8 417.2 L537.8 417.1 L537.8 416.7 L537.8 416.2 L537.8 414.3 L537.8 413.8 L537.8 413.4 L537.8 413.3 L538.4 412.7 L541.0 409.8 L544.2 406.4 L556.6 393.0 L560.4 388.9 L565.7 382.7 L569.5 378.2 L581.8 362.9 L585.3 358.6 L589.0 353.7 L590.8 351.0 L595.6 343.4 L597.3 341.2 L600.4 338.6 L603.0 337.2 L612.6 332.9 L615.5 331.7 L619.8 330.5 L623.0 330.0 L633.4 328.5 L636.6 328.2 L640.9 328.1 L643.8 328.3 L653.4 329.2 L655.8 329.5 L657.9 329.7Z" fill="none" stroke="#2c52bf" stroke-width="1.6"/>
<path d="M568.0 387.6 L606.9 343.9 L647.8 381.8 L599.2 416.8Z" fill="#2e54bd" clip-path="url(#bc5)"/>
<path d="M563.0 386.1 L601.9 342.4 L642.8 380.3 L594.2 415.3Z" fill="#3f72e8" stroke="#2d52b8" stroke-width="1" stroke-linejoin="round"/>
<circle cx="581.5" cy="391.9" r="9" fill="#4176f0" stroke="#2a4fb4" stroke-width="0.9"/>
<circle cx="581.5" cy="391.9" r="3.8" fill="#1f3c92"/>
<path d="M570.5 405.5 L577 402.5" stroke="#23409a" stroke-width="2.8" stroke-linecap="square"/>
<path d="M574 403.5 L585.5 419.5" stroke="#23409a" stroke-width="2.8" stroke-linecap="square"/>
<circle cx="559.2" cy="431.8" r="3.6" fill="#4275ec" stroke="#2a4cb0" stroke-width="1"/><circle cx="559.2" cy="431.8" r="1.5" fill="#24439e"/>
</g>
<g>
<path d="M752.0 464.7 L752.3 464.3 L753.8 462.4 L755.6 460.0 L762.5 451.1 L764.8 448.4 L768.5 444.7 L771.5 442.1 L781.8 433.8 L785.0 431.4 L789.4 428.5 L792.6 426.6 L802.9 421.2 L805.9 419.6 L809.6 418.1 L811.9 417.4 L818.7 415.7 L821.3 415.2 L826.5 414.8 L831.3 414.6 L848.5 414.3 L854.0 414.2 L862.4 414.0 L869.0 413.9 L891.0 413.6 L896.9 413.5 L902.0 413.7 L903.6 413.9 L905.6 415.0 L906.2 415.2 L906.6 415.5 L906.7 415.5 L906.9 416.7 L907.8 422.1 L908.9 428.8 L913.0 454.2 L914.1 460.9 L915.0 466.3 L915.2 467.5 L915.1 467.6 L914.8 467.9 L914.5 468.2 L913.0 469.6 L911.8 470.1 L907.2 471.3 L901.9 472.5 L882.0 476.6 L876.2 477.9 L868.9 479.9 L864.4 481.3 L850.6 486.1 L846.4 487.5 L840.5 489.3 L836.2 490.4 L822.5 493.8 L818.6 494.7 L814.1 495.4 L811.7 495.6 L804.8 495.6 L802.5 495.4 L798.8 494.7 L795.8 493.8 L785.6 490.4 L782.5 489.3 L778.3 487.5 L775.5 486.1 L766.6 481.3 L764.0 479.9 L761.2 477.9 L759.7 476.6 L755.6 472.5 L754.5 471.3 L753.4 469.8 L753.0 468.9 L752.4 466.1 L752.2 465.4 L752.0 464.8Z" fill="#3c6bdf"/>
<path d="M752.0 464.7 L752.3 464.3 L753.8 462.4 L755.6 460.0 L762.5 451.1 L764.8 448.4 L768.5 444.7 L771.5 442.1 L781.8 433.8 L785.0 431.4 L789.4 428.5 L792.6 426.6 L802.9 421.2 L805.9 419.6 L809.6 418.1 L811.9 417.4 L818.7 415.7 L821.3 415.2 L826.5 414.8 L831.3 414.6 L848.5 414.3 L854.0 414.2 L862.4 414.0 L869.0 413.9 L891.0 413.6 L896.9 413.5 L902.0 413.7 L903.6 413.9 L905.6 415.0 L906.2 415.2 L906.6 415.5 L906.7 415.5 L906.9 416.7 L907.8 422.1 L908.9 428.8 L913.0 454.2 L914.1 460.9 L915.0 466.3 L915.2 467.5 L915.1 467.6 L914.8 467.9 L914.5 468.2 L913.0 469.6 L911.8 470.1 L907.2 471.3 L901.9 472.5 L882.0 476.6 L876.2 477.9 L868.9 479.9 L864.4 481.3 L850.6 486.1 L846.4 487.5 L840.5 489.3 L836.2 490.4 L822.5 493.8 L818.6 494.7 L814.1 495.4 L811.7 495.6 L804.8 495.6 L802.5 495.4 L798.8 494.7 L795.8 493.8 L785.6 490.4 L782.5 489.3 L778.3 487.5 L775.5 486.1 L766.6 481.3 L764.0 479.9 L761.2 477.9 L759.7 476.6 L755.6 472.5 L754.5 471.3 L753.4 469.8 L753.0 468.9 L752.4 466.1 L752.2 465.4 L752.0 464.8Z" fill="none" stroke="#4072ea" stroke-width="14" clip-path="url(#bc6)"/>
<g mask="url(#mk6)"><path d="M752.0 464.7 L752.3 464.3 L753.8 462.4 L755.6 460.0 L762.5 451.1 L764.8 448.4 L768.5 444.7 L771.5 442.1 L781.8 433.8 L785.0 431.4 L789.4 428.5 L792.6 426.6 L802.9 421.2 L805.9 419.6 L809.6 418.1 L811.9 417.4 L818.7 415.7 L821.3 415.2 L826.5 414.8 L831.3 414.6 L848.5 414.3 L854.0 414.2 L862.4 414.0 L869.0 413.9 L891.0 413.6 L896.9 413.5 L902.0 413.7 L903.6 413.9 L905.6 415.0 L906.2 415.2 L906.6 415.5 L906.7 415.5 L906.9 416.7 L907.8 422.1 L908.9 428.8 L913.0 454.2 L914.1 460.9 L915.0 466.3 L915.2 467.5 L915.1 467.6 L914.8 467.9 L914.5 468.2 L913.0 469.6 L911.8 470.1 L907.2 471.3 L901.9 472.5 L882.0 476.6 L876.2 477.9 L868.9 479.9 L864.4 481.3 L850.6 486.1 L846.4 487.5 L840.5 489.3 L836.2 490.4 L822.5 493.8 L818.6 494.7 L814.1 495.4 L811.7 495.6 L804.8 495.6 L802.5 495.4 L798.8 494.7 L795.8 493.8 L785.6 490.4 L782.5 489.3 L778.3 487.5 L775.5 486.1 L766.6 481.3 L764.0 479.9 L761.2 477.9 L759.7 476.6 L755.6 472.5 L754.5 471.3 L753.4 469.8 L753.0 468.9 L752.4 466.1 L752.2 465.4 L752.0 464.8Z" fill="none" stroke="#22409c" stroke-width="14" clip-path="url(#bc6)"/></g>
<path d="M752.0 464.7 L752.3 464.3 L753.8 462.4 L755.6 460.0 L762.5 451.1 L764.8 448.4 L768.5 444.7 L771.5 442.1 L781.8 433.8 L785.0 431.4 L789.4 428.5 L792.6 426.6 L802.9 421.2 L805.9 419.6 L809.6 418.1 L811.9 417.4 L818.7 415.7 L821.3 415.2 L826.5 414.8 L831.3 414.6 L848.5 414.3 L854.0 414.2 L862.4 414.0 L869.0 413.9 L891.0 413.6 L896.9 413.5 L902.0 413.7 L903.6 413.9 L905.6 415.0 L906.2 415.2 L906.6 415.5 L906.7 415.5 L906.9 416.7 L907.8 422.1 L908.9 428.8 L913.0 454.2 L914.1 460.9 L915.0 466.3 L915.2 467.5 L915.1 467.6 L914.8 467.9 L914.5 468.2 L913.0 469.6 L911.8 470.1 L907.2 471.3 L901.9 472.5 L882.0 476.6 L876.2 477.9 L868.9 479.9 L864.4 481.3 L850.6 486.1 L846.4 487.5 L840.5 489.3 L836.2 490.4 L822.5 493.8 L818.6 494.7 L814.1 495.4 L811.7 495.6 L804.8 495.6 L802.5 495.4 L798.8 494.7 L795.8 493.8 L785.6 490.4 L782.5 489.3 L778.3 487.5 L775.5 486.1 L766.6 481.3 L764.0 479.9 L761.2 477.9 L759.7 476.6 L755.6 472.5 L754.5 471.3 L753.4 469.8 L753.0 468.9 L752.4 466.1 L752.2 465.4 L752.0 464.8Z" fill="none" stroke="#3d6de3" stroke-width="9" clip-path="url(#bc6)"/>
<path d="M752.0 464.7 L752.3 464.3 L753.8 462.4 L755.6 460.0 L762.5 451.1 L764.8 448.4 L768.5 444.7 L771.5 442.1 L781.8 433.8 L785.0 431.4 L789.4 428.5 L792.6 426.6 L802.9 421.2 L805.9 419.6 L809.6 418.1 L811.9 417.4 L818.7 415.7 L821.3 415.2 L826.5 414.8 L831.3 414.6 L848.5 414.3 L854.0 414.2 L862.4 414.0 L869.0 413.9 L891.0 413.6 L896.9 413.5 L902.0 413.7 L903.6 413.9 L905.6 415.0 L906.2 415.2 L906.6 415.5 L906.7 415.5 L906.9 416.7 L907.8 422.1 L908.9 428.8 L913.0 454.2 L914.1 460.9 L915.0 466.3 L915.2 467.5 L915.1 467.6 L914.8 467.9 L914.5 468.2 L913.0 469.6 L911.8 470.1 L907.2 471.3 L901.9 472.5 L882.0 476.6 L876.2 477.9 L868.9 479.9 L864.4 481.3 L850.6 486.1 L846.4 487.5 L840.5 489.3 L836.2 490.4 L822.5 493.8 L818.6 494.7 L814.1 495.4 L811.7 495.6 L804.8 495.6 L802.5 495.4 L798.8 494.7 L795.8 493.8 L785.6 490.4 L782.5 489.3 L778.3 487.5 L775.5 486.1 L766.6 481.3 L764.0 479.9 L761.2 477.9 L759.7 476.6 L755.6 472.5 L754.5 471.3 L753.4 469.8 L753.0 468.9 L752.4 466.1 L752.2 465.4 L752.0 464.8Z" fill="none" stroke="#2c52bf" stroke-width="1.6"/>
<path d="M790.8 436.7 L851.3 431.0 L858.3 473.2 L797.8 485.9Z" fill="#2e54bd" clip-path="url(#bc6)"/>
<path d="M785.8 435.2 L846.3 429.5 L853.3 471.7 L792.8 484.4Z" fill="#3f72e8" stroke="#2d52b8" stroke-width="1" stroke-linejoin="round"/>
<circle cx="833.6" cy="453.4" r="9" fill="#4176f0" stroke="#2a4fb4" stroke-width="0.9"/>
<circle cx="833.6" cy="453.4" r="3.8" fill="#1f3c92"/>
<path d="M857.0 437.0 L880.0 433.0 L884.0 459.0 L861.0 461.0Z" fill="none" stroke="#3566d8" stroke-width="1"/>
<path d="M861.0 461.0 L857.0 437.0" stroke="#23409a" stroke-width="2.6" stroke-linecap="square"/>
<path d="M857.0 437.0 L880.0 433.0" stroke="#23409a" stroke-width="2.6" stroke-linecap="square"/>
<circle cx="904.6" cy="441.5" r="3.6" fill="#4275ec" stroke="#2a4cb0" stroke-width="1"/><circle cx="904.6" cy="441.5" r="1.5" fill="#24439e"/>
</g>
<g>
<path d="M675.0 456.2 L675.1 456.3 L675.8 456.4 L676.6 456.5 L679.7 457.0 L681.1 457.7 L684.6 460.3 L688.1 463.4 L701.4 475.1 L705.5 478.9 L711.1 484.4 L715.2 488.7 L728.5 503.0 L732.2 507.1 L736.1 512.1 L738.1 515.2 L743.1 524.4 L744.6 527.4 L746.2 532.0 L747.1 535.6 L749.7 547.8 L750.3 551.6 L750.8 556.8 L750.7 560.6 L750.3 572.8 L750.0 576.3 L749.5 580.5 L748.9 582.9 L746.9 590.0 L746.3 591.9 L745.9 593.4 L745.8 593.8 L745.2 593.7 L742.4 593.2 L738.9 592.7 L725.6 590.7 L721.6 589.9 L716.2 588.4 L712.4 586.9 L700.1 581.9 L696.7 580.3 L692.7 578.4 L690.6 577.1 L684.4 572.9 L682.7 571.5 L680.5 568.9 L679.1 566.6 L675.0 558.4 L673.6 555.7 L671.2 551.1 L669.2 547.3 L662.0 534.0 L659.6 529.8 L655.7 523.2 L652.5 518.1 L641.2 500.7 L638.3 496.2 L635.9 492.5 L635.4 491.7 L635.4 491.6 L635.5 491.2 L635.7 490.6 L636.2 488.6 L637.2 487.3 L641.4 483.6 L646.3 479.5 L665.2 464.2 L670.1 460.2 L674.1 457.0Z" fill="#3c6bdf"/>
<path d="M733.0 542.0 L688.0 580.0 L700.0 640.0 L790.0 600.0 L770.0 520.0Z" fill="#5085f8" clip-path="url(#bc7)"/>
<path d="M675.0 456.2 L675.1 456.3 L675.8 456.4 L676.6 456.5 L679.7 457.0 L681.1 457.7 L684.6 460.3 L688.1 463.4 L701.4 475.1 L705.5 478.9 L711.1 484.4 L715.2 488.7 L728.5 503.0 L732.2 507.1 L736.1 512.1 L738.1 515.2 L743.1 524.4 L744.6 527.4 L746.2 532.0 L747.1 535.6 L749.7 547.8 L750.3 551.6 L750.8 556.8 L750.7 560.6 L750.3 572.8 L750.0 576.3 L749.5 580.5 L748.9 582.9 L746.9 590.0 L746.3 591.9 L745.9 593.4 L745.8 593.8 L745.2 593.7 L742.4 593.2 L738.9 592.7 L725.6 590.7 L721.6 589.9 L716.2 588.4 L712.4 586.9 L700.1 581.9 L696.7 580.3 L692.7 578.4 L690.6 577.1 L684.4 572.9 L682.7 571.5 L680.5 568.9 L679.1 566.6 L675.0 558.4 L673.6 555.7 L671.2 551.1 L669.2 547.3 L662.0 534.0 L659.6 529.8 L655.7 523.2 L652.5 518.1 L641.2 500.7 L638.3 496.2 L635.9 492.5 L635.4 491.7 L635.4 491.6 L635.5 491.2 L635.7 490.6 L636.2 488.6 L637.2 487.3 L641.4 483.6 L646.3 479.5 L665.2 464.2 L670.1 460.2 L674.1 457.0Z" fill="none" stroke="#4072ea" stroke-width="14" clip-path="url(#bc7)"/>
<g mask="url(#mk7)"><path d="M675.0 456.2 L675.1 456.3 L675.8 456.4 L676.6 456.5 L679.7 457.0 L681.1 457.7 L684.6 460.3 L688.1 463.4 L701.4 475.1 L705.5 478.9 L711.1 484.4 L715.2 488.7 L728.5 503.0 L732.2 507.1 L736.1 512.1 L738.1 515.2 L743.1 524.4 L744.6 527.4 L746.2 532.0 L747.1 535.6 L749.7 547.8 L750.3 551.6 L750.8 556.8 L750.7 560.6 L750.3 572.8 L750.0 576.3 L749.5 580.5 L748.9 582.9 L746.9 590.0 L746.3 591.9 L745.9 593.4 L745.8 593.8 L745.2 593.7 L742.4 593.2 L738.9 592.7 L725.6 590.7 L721.6 589.9 L716.2 588.4 L712.4 586.9 L700.1 581.9 L696.7 580.3 L692.7 578.4 L690.6 577.1 L684.4 572.9 L682.7 571.5 L680.5 568.9 L679.1 566.6 L675.0 558.4 L673.6 555.7 L671.2 551.1 L669.2 547.3 L662.0 534.0 L659.6 529.8 L655.7 523.2 L652.5 518.1 L641.2 500.7 L638.3 496.2 L635.9 492.5 L635.4 491.7 L635.4 491.6 L635.5 491.2 L635.7 490.6 L636.2 488.6 L637.2 487.3 L641.4 483.6 L646.3 479.5 L665.2 464.2 L670.1 460.2 L674.1 457.0Z" fill="none" stroke="#22409c" stroke-width="14" clip-path="url(#bc7)"/></g>
<path d="M675.0 456.2 L675.1 456.3 L675.8 456.4 L676.6 456.5 L679.7 457.0 L681.1 457.7 L684.6 460.3 L688.1 463.4 L701.4 475.1 L705.5 478.9 L711.1 484.4 L715.2 488.7 L728.5 503.0 L732.2 507.1 L736.1 512.1 L738.1 515.2 L743.1 524.4 L744.6 527.4 L746.2 532.0 L747.1 535.6 L749.7 547.8 L750.3 551.6 L750.8 556.8 L750.7 560.6 L750.3 572.8 L750.0 576.3 L749.5 580.5 L748.9 582.9 L746.9 590.0 L746.3 591.9 L745.9 593.4 L745.8 593.8 L745.2 593.7 L742.4 593.2 L738.9 592.7 L725.6 590.7 L721.6 589.9 L716.2 588.4 L712.4 586.9 L700.1 581.9 L696.7 580.3 L692.7 578.4 L690.6 577.1 L684.4 572.9 L682.7 571.5 L680.5 568.9 L679.1 566.6 L675.0 558.4 L673.6 555.7 L671.2 551.1 L669.2 547.3 L662.0 534.0 L659.6 529.8 L655.7 523.2 L652.5 518.1 L641.2 500.7 L638.3 496.2 L635.9 492.5 L635.4 491.7 L635.4 491.6 L635.5 491.2 L635.7 490.6 L636.2 488.6 L637.2 487.3 L641.4 483.6 L646.3 479.5 L665.2 464.2 L670.1 460.2 L674.1 457.0Z" fill="none" stroke="#3d6de3" stroke-width="9" clip-path="url(#bc7)"/>
<path d="M675.0 456.2 L675.1 456.3 L675.8 456.4 L676.6 456.5 L679.7 457.0 L681.1 457.7 L684.6 460.3 L688.1 463.4 L701.4 475.1 L705.5 478.9 L711.1 484.4 L715.2 488.7 L728.5 503.0 L732.2 507.1 L736.1 512.1 L738.1 515.2 L743.1 524.4 L744.6 527.4 L746.2 532.0 L747.1 535.6 L749.7 547.8 L750.3 551.6 L750.8 556.8 L750.7 560.6 L750.3 572.8 L750.0 576.3 L749.5 580.5 L748.9 582.9 L746.9 590.0 L746.3 591.9 L745.9 593.4 L745.8 593.8 L745.2 593.7 L742.4 593.2 L738.9 592.7 L725.6 590.7 L721.6 589.9 L716.2 588.4 L712.4 586.9 L700.1 581.9 L696.7 580.3 L692.7 578.4 L690.6 577.1 L684.4 572.9 L682.7 571.5 L680.5 568.9 L679.1 566.6 L675.0 558.4 L673.6 555.7 L671.2 551.1 L669.2 547.3 L662.0 534.0 L659.6 529.8 L655.7 523.2 L652.5 518.1 L641.2 500.7 L638.3 496.2 L635.9 492.5 L635.4 491.7 L635.4 491.6 L635.5 491.2 L635.7 490.6 L636.2 488.6 L637.2 487.3 L641.4 483.6 L646.3 479.5 L665.2 464.2 L670.1 460.2 L674.1 457.0Z" fill="none" stroke="#2c52bf" stroke-width="1.6"/>
<path d="M663.3 526.5 L696.7 503.5 L734.2 547.3 L696.7 578.6Z" fill="#2e54bd" clip-path="url(#bc7)"/>
<path d="M658.3 525.0 L691.7 502.0 L729.2 545.8 L691.7 577.1Z" fill="#3f72e8" stroke="#2d52b8" stroke-width="1" stroke-linejoin="round"/>
<circle cx="678.1" cy="526" r="9" fill="#4176f0" stroke="#2a4fb4" stroke-width="0.9"/>
<circle cx="678.1" cy="526" r="3.8" fill="#1f3c92"/>
<path d="M666.7 503.0 L683.3 493.8 L693.8 502.0 L669.8 512.5Z" fill="none" stroke="#3566d8" stroke-width="1"/>
<path d="M669.8 512.5 L666.7 503.0" stroke="#23409a" stroke-width="2.6" stroke-linecap="square"/>
<path d="M666.7 503.0 L683.3 493.8" stroke="#23409a" stroke-width="2.6" stroke-linecap="square"/>
<circle cx="657.3" cy="476" r="3.6" fill="#4275ec" stroke="#2a4cb0" stroke-width="1"/><circle cx="657.3" cy="476" r="1.5" fill="#24439e"/>
</g>
<g>
<path d="M543.8 581.9 L544.1 581.7 L545.7 580.5 L547.7 579.1 L555.1 573.6 L557.6 572.0 L561.7 570.0 L565.1 568.8 L576.8 564.8 L580.3 563.8 L585.0 562.7 L588.2 562.3 L598.4 561.4 L601.7 561.3 L606.7 561.6 L610.6 562.2 L623.9 564.7 L628.1 565.7 L634.3 567.7 L639.0 569.6 L654.6 576.7 L659.6 579.0 L667.2 582.8 L673.0 586.0 L692.5 597.0 L697.7 600.0 L702.4 602.8 L703.9 603.9 L706.3 606.3 L706.9 606.9 L707.4 607.4 L707.5 607.5 L707.1 608.6 L705.3 613.7 L703.0 619.9 L694.5 643.8 L692.2 650.0 L690.4 655.1 L690.0 656.2 L689.9 656.2 L689.4 656.2 L688.8 656.2 L686.3 656.2 L684.9 656.0 L680.3 654.9 L675.3 653.5 L656.6 648.5 L651.0 647.0 L643.6 645.4 L638.7 644.6 L623.0 642.2 L618.2 641.5 L611.5 640.3 L606.7 639.4 L591.1 636.3 L586.6 635.3 L581.6 633.4 L578.8 631.8 L571.1 626.4 L568.7 624.4 L565.3 620.9 L562.9 617.8 L555.1 606.8 L552.9 603.5 L550.4 599.2 L549.2 596.2 L545.6 586.8 L544.7 584.3 L544.0 582.3Z" fill="#3c6bdf"/>
<path d="M543.8 581.9 L544.1 581.7 L545.7 580.5 L547.7 579.1 L555.1 573.6 L557.6 572.0 L561.7 570.0 L565.1 568.8 L576.8 564.8 L580.3 563.8 L585.0 562.7 L588.2 562.3 L598.4 561.4 L601.7 561.3 L606.7 561.6 L610.6 562.2 L623.9 564.7 L628.1 565.7 L634.3 567.7 L639.0 569.6 L654.6 576.7 L659.6 579.0 L667.2 582.8 L673.0 586.0 L692.5 597.0 L697.7 600.0 L702.4 602.8 L703.9 603.9 L706.3 606.3 L706.9 606.9 L707.4 607.4 L707.5 607.5 L707.1 608.6 L705.3 613.7 L703.0 619.9 L694.5 643.8 L692.2 650.0 L690.4 655.1 L690.0 656.2 L689.9 656.2 L689.4 656.2 L688.8 656.2 L686.3 656.2 L684.9 656.0 L680.3 654.9 L675.3 653.5 L656.6 648.5 L651.0 647.0 L643.6 645.4 L638.7 644.6 L623.0 642.2 L618.2 641.5 L611.5 640.3 L606.7 639.4 L591.1 636.3 L586.6 635.3 L581.6 633.4 L578.8 631.8 L571.1 626.4 L568.7 624.4 L565.3 620.9 L562.9 617.8 L555.1 606.8 L552.9 603.5 L550.4 599.2 L549.2 596.2 L545.6 586.8 L544.7 584.3 L544.0 582.3Z" fill="none" stroke="#4072ea" stroke-width="14" clip-path="url(#bc8)"/>
<g mask="url(#mk8)"><path d="M543.8 581.9 L544.1 581.7 L545.7 580.5 L547.7 579.1 L555.1 573.6 L557.6 572.0 L561.7 570.0 L565.1 568.8 L576.8 564.8 L580.3 563.8 L585.0 562.7 L588.2 562.3 L598.4 561.4 L601.7 561.3 L606.7 561.6 L610.6 562.2 L623.9 564.7 L628.1 565.7 L634.3 567.7 L639.0 569.6 L654.6 576.7 L659.6 579.0 L667.2 582.8 L673.0 586.0 L692.5 597.0 L697.7 600.0 L702.4 602.8 L703.9 603.9 L706.3 606.3 L706.9 606.9 L707.4 607.4 L707.5 607.5 L707.1 608.6 L705.3 613.7 L703.0 619.9 L694.5 643.8 L692.2 650.0 L690.4 655.1 L690.0 656.2 L689.9 656.2 L689.4 656.2 L688.8 656.2 L686.3 656.2 L684.9 656.0 L680.3 654.9 L675.3 653.5 L656.6 648.5 L651.0 647.0 L643.6 645.4 L638.7 644.6 L623.0 642.2 L618.2 641.5 L611.5 640.3 L606.7 639.4 L591.1 636.3 L586.6 635.3 L581.6 633.4 L578.8 631.8 L571.1 626.4 L568.7 624.4 L565.3 620.9 L562.9 617.8 L555.1 606.8 L552.9 603.5 L550.4 599.2 L549.2 596.2 L545.6 586.8 L544.7 584.3 L544.0 582.3Z" fill="none" stroke="#22409c" stroke-width="14" clip-path="url(#bc8)"/></g>
<path d="M543.8 581.9 L544.1 581.7 L545.7 580.5 L547.7 579.1 L555.1 573.6 L557.6 572.0 L561.7 570.0 L565.1 568.8 L576.8 564.8 L580.3 563.8 L585.0 562.7 L588.2 562.3 L598.4 561.4 L601.7 561.3 L606.7 561.6 L610.6 562.2 L623.9 564.7 L628.1 565.7 L634.3 567.7 L639.0 569.6 L654.6 576.7 L659.6 579.0 L667.2 582.8 L673.0 586.0 L692.5 597.0 L697.7 600.0 L702.4 602.8 L703.9 603.9 L706.3 606.3 L706.9 606.9 L707.4 607.4 L707.5 607.5 L707.1 608.6 L705.3 613.7 L703.0 619.9 L694.5 643.8 L692.2 650.0 L690.4 655.1 L690.0 656.2 L689.9 656.2 L689.4 656.2 L688.8 656.2 L686.3 656.2 L684.9 656.0 L680.3 654.9 L675.3 653.5 L656.6 648.5 L651.0 647.0 L643.6 645.4 L638.7 644.6 L623.0 642.2 L618.2 641.5 L611.5 640.3 L606.7 639.4 L591.1 636.3 L586.6 635.3 L581.6 633.4 L578.8 631.8 L571.1 626.4 L568.7 624.4 L565.3 620.9 L562.9 617.8 L555.1 606.8 L552.9 603.5 L550.4 599.2 L549.2 596.2 L545.6 586.8 L544.7 584.3 L544.0 582.3Z" fill="none" stroke="#3d6de3" stroke-width="9" clip-path="url(#bc8)"/>
<path d="M543.8 581.9 L544.1 581.7 L545.7 580.5 L547.7 579.1 L555.1 573.6 L557.6 572.0 L561.7 570.0 L565.1 568.8 L576.8 564.8 L580.3 563.8 L585.0 562.7 L588.2 562.3 L598.4 561.4 L601.7 561.3 L606.7 561.6 L610.6 562.2 L623.9 564.7 L628.1 565.7 L634.3 567.7 L639.0 569.6 L654.6 576.7 L659.6 579.0 L667.2 582.8 L673.0 586.0 L692.5 597.0 L697.7 600.0 L702.4 602.8 L703.9 603.9 L706.3 606.3 L706.9 606.9 L707.4 607.4 L707.5 607.5 L707.1 608.6 L705.3 613.7 L703.0 619.9 L694.5 643.8 L692.2 650.0 L690.4 655.1 L690.0 656.2 L689.9 656.2 L689.4 656.2 L688.8 656.2 L686.3 656.2 L684.9 656.0 L680.3 654.9 L675.3 653.5 L656.6 648.5 L651.0 647.0 L643.6 645.4 L638.7 644.6 L623.0 642.2 L618.2 641.5 L611.5 640.3 L606.7 639.4 L591.1 636.3 L586.6 635.3 L581.6 633.4 L578.8 631.8 L571.1 626.4 L568.7 624.4 L565.3 620.9 L562.9 617.8 L555.1 606.8 L552.9 603.5 L550.4 599.2 L549.2 596.2 L545.6 586.8 L544.7 584.3 L544.0 582.3Z" fill="none" stroke="#2c52bf" stroke-width="1.6"/>
<path d="M589.5 577.9 L646.2 599.4 L632.6 640.1 L574.3 624.2Z" fill="#2e54bd" clip-path="url(#bc8)"/>
<path d="M584.5 576.4 L641.2 597.9 L627.6 638.6 L569.3 622.7Z" fill="#3f72e8" stroke="#2d52b8" stroke-width="1" stroke-linejoin="round"/>
<circle cx="618" cy="617.1" r="10" fill="#4176f0" stroke="#2a4fb4" stroke-width="0.9"/>
<circle cx="618" cy="617.1" r="4.2" fill="#1f3c92"/>
<path d="M652.4 605.9 L675.5 609.1 L666.0 633.0 L645.2 625.1Z" fill="none" stroke="#3566d8" stroke-width="1"/>
<path d="M645.2 625.1 L652.4 605.9" stroke="#23409a" stroke-width="2.6" stroke-linecap="square"/>
<path d="M666.0 633.0 L645.2 625.1" stroke="#23409a" stroke-width="2.6" stroke-linecap="square"/>
<circle cx="693.1" cy="629" r="3.6" fill="#4275ec" stroke="#2a4cb0" stroke-width="1"/><circle cx="693.1" cy="629" r="1.5" fill="#24439e"/>
</g>
<g>
<path d="M856.2 548.3 L856.3 548.3 L856.8 548.4 L857.3 548.6 L859.3 549.1 L860.6 550.1 L864.7 553.9 L869.2 558.4 L886.0 575.8 L890.4 580.3 L894.0 584.0 L894.8 584.8 L894.8 584.9 L894.7 585.3 L894.5 585.9 L894.0 587.9 L893.3 589.2 L890.3 593.3 L886.9 597.7 L873.6 614.6 L869.8 619.4 L865.4 625.4 L863.0 629.0 L855.7 639.8 L853.6 642.9 L851.0 646.5 L849.4 648.6 L844.3 654.4 L842.6 656.2 L839.8 658.7 L837.4 660.5 L829.3 666.2 L826.7 667.9 L822.7 670.1 L819.7 671.5 L809.5 676.0 L806.4 677.2 L802.0 678.6 L798.9 679.3 L788.6 681.1 L785.6 681.6 L781.4 681.9 L778.6 681.9 L769.7 681.5 L767.2 681.3 L764.9 681.0 L763.9 680.7 L761.9 679.7 L761.3 679.5 L760.9 679.2 L760.8 679.2 L760.8 678.9 L760.6 677.7 L760.4 676.2 L759.6 670.5 L759.5 668.5 L759.7 665.1 L760.0 662.2 L761.7 652.0 L762.2 649.0 L763.2 645.0 L764.0 642.4 L766.8 634.3 L767.8 631.7 L769.3 627.9 L770.5 625.1 L774.9 615.7 L776.5 612.7 L780.1 608.3 L783.5 605.0 L795.7 593.7 L799.6 590.3 L805.5 585.5 L810.1 582.1 L825.3 570.8 L829.8 567.6 L835.3 563.5 L838.6 561.0 L848.9 553.4 L851.6 551.4 L854.0 549.6 L854.7 549.1 L855.7 548.6 L856.0 548.4 L856.2 548.3Z" fill="#3c6bdf"/>
<path d="M856.2 548.3 L856.3 548.3 L856.8 548.4 L857.3 548.6 L859.3 549.1 L860.6 550.1 L864.7 553.9 L869.2 558.4 L886.0 575.8 L890.4 580.3 L894.0 584.0 L894.8 584.8 L894.8 584.9 L894.7 585.3 L894.5 585.9 L894.0 587.9 L893.3 589.2 L890.3 593.3 L886.9 597.7 L873.6 614.6 L869.8 619.4 L865.4 625.4 L863.0 629.0 L855.7 639.8 L853.6 642.9 L851.0 646.5 L849.4 648.6 L844.3 654.4 L842.6 656.2 L839.8 658.7 L837.4 660.5 L829.3 666.2 L826.7 667.9 L822.7 670.1 L819.7 671.5 L809.5 676.0 L806.4 677.2 L802.0 678.6 L798.9 679.3 L788.6 681.1 L785.6 681.6 L781.4 681.9 L778.6 681.9 L769.7 681.5 L767.2 681.3 L764.9 681.0 L763.9 680.7 L761.9 679.7 L761.3 679.5 L760.9 679.2 L760.8 679.2 L760.8 678.9 L760.6 677.7 L760.4 676.2 L759.6 670.5 L759.5 668.5 L759.7 665.1 L760.0 662.2 L761.7 652.0 L762.2 649.0 L763.2 645.0 L764.0 642.4 L766.8 634.3 L767.8 631.7 L769.3 627.9 L770.5 625.1 L774.9 615.7 L776.5 612.7 L780.1 608.3 L783.5 605.0 L795.7 593.7 L799.6 590.3 L805.5 585.5 L810.1 582.1 L825.3 570.8 L829.8 567.6 L835.3 563.5 L838.6 561.0 L848.9 553.4 L851.6 551.4 L854.0 549.6 L854.7 549.1 L855.7 548.6 L856.0 548.4 L856.2 548.3Z" fill="none" stroke="#4072ea" stroke-width="14" clip-path="url(#bc9)"/>
<g mask="url(#mk9)"><path d="M856.2 548.3 L856.3 548.3 L856.8 548.4 L857.3 548.6 L859.3 549.1 L860.6 550.1 L864.7 553.9 L869.2 558.4 L886.0 575.8 L890.4 580.3 L894.0 584.0 L894.8 584.8 L894.8 584.9 L894.7 585.3 L894.5 585.9 L894.0 587.9 L893.3 589.2 L890.3 593.3 L886.9 597.7 L873.6 614.6 L869.8 619.4 L865.4 625.4 L863.0 629.0 L855.7 639.8 L853.6 642.9 L851.0 646.5 L849.4 648.6 L844.3 654.4 L842.6 656.2 L839.8 658.7 L837.4 660.5 L829.3 666.2 L826.7 667.9 L822.7 670.1 L819.7 671.5 L809.5 676.0 L806.4 677.2 L802.0 678.6 L798.9 679.3 L788.6 681.1 L785.6 681.6 L781.4 681.9 L778.6 681.9 L769.7 681.5 L767.2 681.3 L764.9 681.0 L763.9 680.7 L761.9 679.7 L761.3 679.5 L760.9 679.2 L760.8 679.2 L760.8 678.9 L760.6 677.7 L760.4 676.2 L759.6 670.5 L759.5 668.5 L759.7 665.1 L760.0 662.2 L761.7 652.0 L762.2 649.0 L763.2 645.0 L764.0 642.4 L766.8 634.3 L767.8 631.7 L769.3 627.9 L770.5 625.1 L774.9 615.7 L776.5 612.7 L780.1 608.3 L783.5 605.0 L795.7 593.7 L799.6 590.3 L805.5 585.5 L810.1 582.1 L825.3 570.8 L829.8 567.6 L835.3 563.5 L838.6 561.0 L848.9 553.4 L851.6 551.4 L854.0 549.6 L854.7 549.1 L855.7 548.6 L856.0 548.4 L856.2 548.3Z" fill="none" stroke="#22409c" stroke-width="14" clip-path="url(#bc9)"/></g>
<path d="M856.2 548.3 L856.3 548.3 L856.8 548.4 L857.3 548.6 L859.3 549.1 L860.6 550.1 L864.7 553.9 L869.2 558.4 L886.0 575.8 L890.4 580.3 L894.0 584.0 L894.8 584.8 L894.8 584.9 L894.7 585.3 L894.5 585.9 L894.0 587.9 L893.3 589.2 L890.3 593.3 L886.9 597.7 L873.6 614.6 L869.8 619.4 L865.4 625.4 L863.0 629.0 L855.7 639.8 L853.6 642.9 L851.0 646.5 L849.4 648.6 L844.3 654.4 L842.6 656.2 L839.8 658.7 L837.4 660.5 L829.3 666.2 L826.7 667.9 L822.7 670.1 L819.7 671.5 L809.5 676.0 L806.4 677.2 L802.0 678.6 L798.9 679.3 L788.6 681.1 L785.6 681.6 L781.4 681.9 L778.6 681.9 L769.7 681.5 L767.2 681.3 L764.9 681.0 L763.9 680.7 L761.9 679.7 L761.3 679.5 L760.9 679.2 L760.8 679.2 L760.8 678.9 L760.6 677.7 L760.4 676.2 L759.6 670.5 L759.5 668.5 L759.7 665.1 L760.0 662.2 L761.7 652.0 L762.2 649.0 L763.2 645.0 L764.0 642.4 L766.8 634.3 L767.8 631.7 L769.3 627.9 L770.5 625.1 L774.9 615.7 L776.5 612.7 L780.1 608.3 L783.5 605.0 L795.7 593.7 L799.6 590.3 L805.5 585.5 L810.1 582.1 L825.3 570.8 L829.8 567.6 L835.3 563.5 L838.6 561.0 L848.9 553.4 L851.6 551.4 L854.0 549.6 L854.7 549.1 L855.7 548.6 L856.0 548.4 L856.2 548.3Z" fill="none" stroke="#3d6de3" stroke-width="9" clip-path="url(#bc9)"/>
<path d="M856.2 548.3 L856.3 548.3 L856.8 548.4 L857.3 548.6 L859.3 549.1 L860.6 550.1 L864.7 553.9 L869.2 558.4 L886.0 575.8 L890.4 580.3 L894.0 584.0 L894.8 584.8 L894.8 584.9 L894.7 585.3 L894.5 585.9 L894.0 587.9 L893.3 589.2 L890.3 593.3 L886.9 597.7 L873.6 614.6 L869.8 619.4 L865.4 625.4 L863.0 629.0 L855.7 639.8 L853.6 642.9 L851.0 646.5 L849.4 648.6 L844.3 654.4 L842.6 656.2 L839.8 658.7 L837.4 660.5 L829.3 666.2 L826.7 667.9 L822.7 670.1 L819.7 671.5 L809.5 676.0 L806.4 677.2 L802.0 678.6 L798.9 679.3 L788.6 681.1 L785.6 681.6 L781.4 681.9 L778.6 681.9 L769.7 681.5 L767.2 681.3 L764.9 681.0 L763.9 680.7 L761.9 679.7 L761.3 679.5 L760.9 679.2 L760.8 679.2 L760.8 678.9 L760.6 677.7 L760.4 676.2 L759.6 670.5 L759.5 668.5 L759.7 665.1 L760.0 662.2 L761.7 652.0 L762.2 649.0 L763.2 645.0 L764.0 642.4 L766.8 634.3 L767.8 631.7 L769.3 627.9 L770.5 625.1 L774.9 615.7 L776.5 612.7 L780.1 608.3 L783.5 605.0 L795.7 593.7 L799.6 590.3 L805.5 585.5 L810.1 582.1 L825.3 570.8 L829.8 567.6 L835.3 563.5 L838.6 561.0 L848.9 553.4 L851.6 551.4 L854.0 549.6 L854.7 549.1 L855.7 548.6 L856.0 548.4 L856.2 548.3Z" fill="none" stroke="#2c52bf" stroke-width="1.6"/>
<path d="M774.8 635.2 L819.6 595.7 L850.8 626.9 L809.2 669.6Z" fill="#2e54bd" clip-path="url(#bc9)"/>
<path d="M769.8 633.8 L814.6 594.2 L845.8 625.4 L804.2 668.1Z" fill="#3f72e8" stroke="#2d52b8" stroke-width="1" stroke-linejoin="round"/>
<circle cx="816.7" cy="619.2" r="10" fill="#4176f0" stroke="#2a4fb4" stroke-width="0.9"/>
<circle cx="816.7" cy="619.2" r="4.2" fill="#1f3c92"/>
<path d="M833.3 596.2 L845.8 578.5 L864.6 595.2 L849.0 608.8Z" fill="none" stroke="#3566d8" stroke-width="1"/>
<path d="M833.3 596.2 L845.8 578.5" stroke="#23409a" stroke-width="2.6" stroke-linecap="square"/>
<path d="M849.0 608.8 L833.3 596.2" stroke="#23409a" stroke-width="2.6" stroke-linecap="square"/>
<circle cx="872.9" cy="569.2" r="3.6" fill="#4275ec" stroke="#2a4cb0" stroke-width="1"/><circle cx="872.9" cy="569.2" r="1.5" fill="#24439e"/>
</g>
<circle cx="755.6" cy="347.5" r="84" fill="none" stroke="#fff" stroke-width="2.6"/>
<path d="M670.3 313V287H696.3 M782.8 287H808.8V313 M670.3 395.6V421.6H696.3 M782.8 421.6H808.8V395.6 M695 318V292H721 M801.5 292H827.5V318 M695 394.5V420.5H721 M827.5 414.2V394.5" fill="none" stroke="#fff" stroke-width="2.2"/>
<rect x="734.4" y="-2" width="461.6" height="16.5" fill="#f9f9f9"/>
<path d="M741 -3 V3.8 Q741 4.6 741.8 4.6 H760 L761.5 3" fill="none" stroke="#6a6a6a" stroke-width="1.2"/>
<path d="M762.5 -1 A6.8 6.8 0 0 0 775.6 -1" fill="none" stroke="#6a6a6a" stroke-width="1.2"/><path d="M768.9 -2 V2" stroke="#6a6a6a" stroke-width="1.1"/>
<path d="M784.5 -3 V3.6 H803 M790 -3 V3.6 M796 -3 V3.6" fill="none" stroke="#6a6a6a" stroke-width="1.2"/>
<path d="M803.2 -1 A6.6 6.6 0 0 0 815.8 -1 M803.2 -1 A6.6 6.6 0 0 0 815.8 -1" fill="none" stroke="#6a6a6a" stroke-width="1.2"/><path d="M809.5 -2 V4" stroke="#6a6a6a" stroke-width="1.1"/>
<rect x="829.2" y="3" width="27.6" height="3.4" rx="1.7" fill="none" stroke="#6a6a6a" stroke-width="1.1"/><path d="M828.5 -2 V0.6" stroke="#6a6a6a" stroke-width="1"/>
<path d="M868.6 -3 V6.2 H897.8 V-3" fill="none" stroke="#6a6a6a" stroke-width="1.2"/><path d="M872 -3 V2.6 H878.5 V-3 M881 -3 V2.6 H894.5 V-3" fill="none" stroke="#6a6a6a" stroke-width="1.1"/>
<path d="M919.5 -3 V1.8 H924" fill="none" stroke="#c8c8c8" stroke-width="1.1"/><path d="M925 -3 V7.4 H946.5 V-3" fill="none" stroke="#c8c8c8" stroke-width="1.1"/><circle cx="936" cy="-1" r="2.3" fill="none" stroke="#c8c8c8" stroke-width="1"/>
<path d="M961.5 -3 V1.8 H966" fill="none" stroke="#c8c8c8" stroke-width="1.1"/><path d="M967 -3 V7.4 H988.5 V-3" fill="none" stroke="#c8c8c8" stroke-width="1.1"/><path d="M977.5 -3 V1" stroke="#c8c8c8" stroke-width="1"/>
<path d="M1004.5 -3 V4 H1030 V-3" fill="none" stroke="#6a6a6a" stroke-width="1.4"/>
<path d="M1053.6 -2 V5.6" stroke="#6a6a6a" stroke-width="1"/>
<path d="M1085.5 -3 V2.5 H1083 L1089 7.5 L1095 2.5 H1092.5 V-3" fill="none" stroke="#6a6a6a" stroke-width="1.2" stroke-linejoin="round"/>
<path d="M1122.5 -1 L1130.5 7.2 L1138.5 -1" fill="none" stroke="#6a6a6a" stroke-width="1.2"/>
<path d="M1158.5 -3 V5.8 H1174" fill="none" stroke="#6a6a6a" stroke-width="1.3"/><path d="M1177 5 H1178.5 M1181.5 5 H1183 M1187 5 H1188.5 M1187.8 0.5 V2.5" stroke="#6a6a6a" stroke-width="1.3"/>
<path d="M529.6 24.8 L529.6 20.6 L542.2 8.2 Q544.8 6.2 546.8 8.4 Q548.4 10.6 546.6 12.6 L534 25 Z" fill="none" stroke="#4a80f5" stroke-width="2.2" stroke-linejoin="round"/>
<path d="M527.5 30 H548.6" stroke="#4a80f5" stroke-width="2.2" stroke-linecap="round"/>
<rect x="1149.6" y="69.8" width="37" height="37.4" rx="3" fill="none" stroke="#606060" stroke-width="1.8"/>
<path d="M1156 77.6 L1180.4 101 M1180.4 77.6 L1156 101" stroke="#606060" stroke-width="2.2"/>
<rect x="1149.6" y="123.8" width="37" height="37.4" rx="3" fill="none" stroke="#606060" stroke-width="1.8"/>
<path d="M1168.2 128.8 L1183 133.5 L1178.6 148.2 L1164 143.6 Z" fill="none" stroke="#606060" stroke-width="1.6" stroke-linejoin="round"/>
<text x="1151.3" y="135.6" font-size="4.4" font-weight="bold" fill="#606060" font-family="Liberation Sans">AUTO</text>
<path d="M1161.2 139.8 L1156 145" stroke="#606060" stroke-width="2.6" stroke-linecap="round"/><path d="M1153.6 143.2 L1155.5 149.8 L1159.8 145.6 Z" fill="none" stroke="#606060" stroke-width="1.3" stroke-linejoin="round"/>
<rect x="1155.2" y="152.6" width="27" height="3.8" rx="1.9" fill="#d4d4d4" stroke="#606060" stroke-width="1.4"/>
<rect x="1149.6" y="177.8" width="37" height="37.4" rx="3" fill="none" stroke="#606060" stroke-width="1.8"/>
<rect x="1154.6" y="183.2" width="26" height="7" rx="0.8" fill="none" stroke="#606060" stroke-width="1.6"/><rect x="1154.6" y="195" width="5.6" height="15" rx="0.8" fill="none" stroke="#606060" stroke-width="1.6"/><rect x="1165.8" y="195.3" width="14.8" height="4.8" rx="0.8" fill="none" stroke="#606060" stroke-width="1.6"/><rect x="1165.8" y="204.6" width="14.8" height="4.8" rx="0.8" fill="none" stroke="#606060" stroke-width="1.6"/>
<rect x="1149.6" y="231.8" width="37" height="37.4" rx="3" fill="none" stroke="#606060" stroke-width="1.8"/>
<path d="M1161 244.2 V243.6 Q1161 237.6 1167.6 237.6 Q1174.2 237.6 1174.2 243.6 V249.5" fill="none" stroke="#606060" stroke-width="2.4"/>
<rect x="1158.2" y="248.6" width="18.8" height="13.2" rx="1.2" fill="#606060"/>
<path fill-rule="evenodd" fill="#4680f8" d="M1158.5 653.3 C1163.8 653.3 1166.4 657.6 1166.4 664.45 C1166.4 671.3 1163.8 675.6 1158.5 675.6 C1153.2 675.6 1150.6 671.3 1150.6 664.45 C1150.6 657.6 1153.2 653.3 1158.5 653.3 Z M1158.5 658.2 C1156.9 658.2 1156.1 660.4 1156.1 664.45 C1156.1 668.5 1156.9 670.8 1158.5 670.8 C1160.1 670.8 1160.9 668.5 1160.9 664.45 C1160.9 660.4 1160.1 658.2 1158.5 658.2 Z"/>
<path fill="#4680f8" d="M1174 653.6 L1179.2 653.6 L1179.2 675.3 L1173.7 675.3 L1173.7 660.6 L1168.9 663 L1168.9 657.7 Z"/>
</svg>
</body></html>
